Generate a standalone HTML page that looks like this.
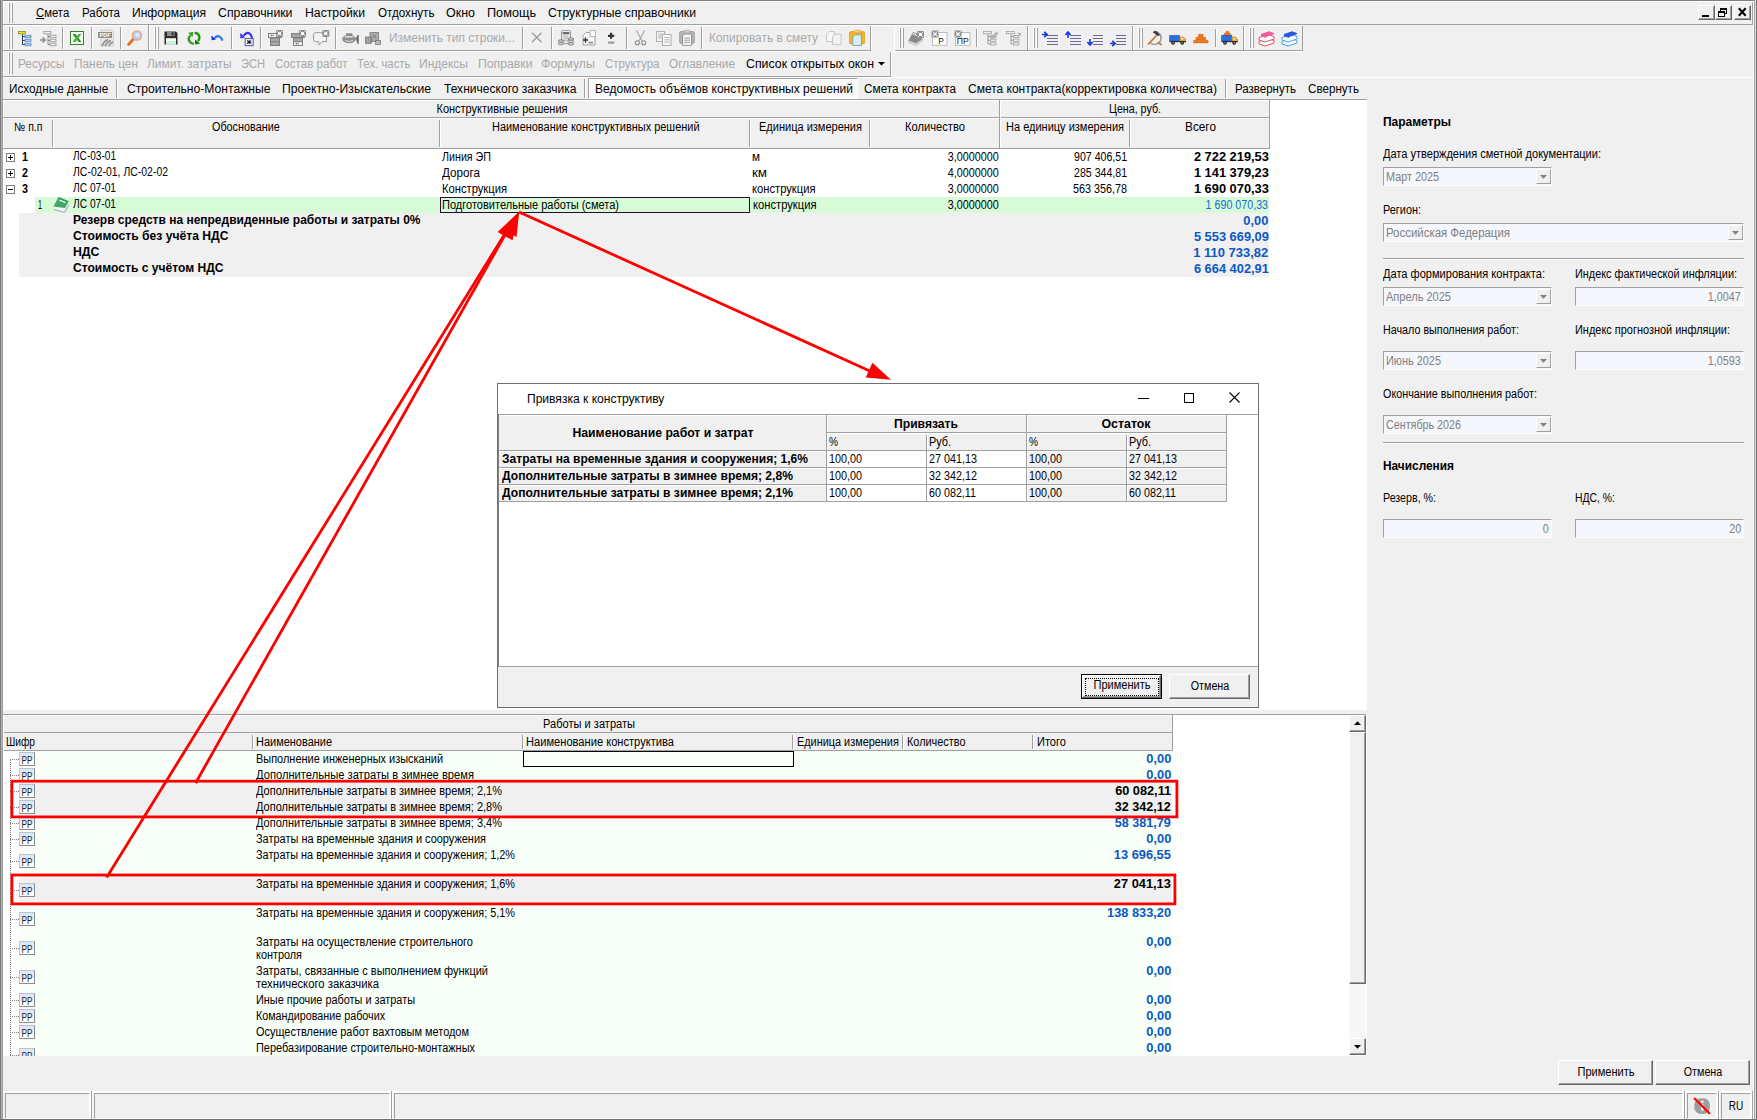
<!DOCTYPE html><html lang="ru"><head><meta charset="utf-8"><title>Смета</title><style>
html,body{margin:0;padding:0;}
body{width:1757px;height:1120px;overflow:hidden;background:#f0f0f0;position:relative;font-family:"Liberation Sans",sans-serif;}
div{position:absolute;box-sizing:border-box;}
svg{position:absolute;overflow:visible;}
.t{position:absolute;white-space:nowrap;display:inline-block;}
</style></head><body>
<div style="left:0px;top:0px;width:1757px;height:1px;background:#808080;"></div>
<div style="left:0px;top:1px;width:1757px;height:1px;background:#fff;"></div>
<div style="left:0px;top:0px;width:1px;height:1120px;background:#7c7c7c;"></div>
<div style="left:1px;top:0px;width:1px;height:1120px;background:#b0b0b0;"></div>
<div style="left:2px;top:0px;width:1px;height:1120px;background:#a0a0a0;"></div>
<div style="left:3px;top:1px;width:1px;height:76px;background:#fff;"></div>
<div style="left:1756px;top:0px;width:1px;height:1120px;background:#707070;"></div>
<div style="left:1755px;top:0px;width:1px;height:1120px;background:#e0e0e0;"></div>
<div style="left:1754px;top:0px;width:1px;height:1120px;background:#a0a0a0;"></div>
<div style="left:1753px;top:1px;width:1px;height:1120px;background:#fff;"></div>
<div style="left:0px;top:1119px;width:1757px;height:1px;background:#707070;"></div>
<div style="left:8px;top:3px;width:1px;height:20px;background:#fff;"></div>
<div style="left:9px;top:3px;width:1px;height:20px;background:#a0a0a0;"></div>
<div style="left:11px;top:3px;width:1px;height:20px;background:#fff;"></div>
<div style="left:12px;top:3px;width:1px;height:20px;background:#a0a0a0;"></div>
<div style="left:3px;top:24px;width:1750px;height:1px;background:#a0a0a0;"></div>
<div style="left:3px;top:25px;width:1300px;height:1px;background:#fff;"></div>
<div style="left:1752px;top:2px;width:1px;height:23px;background:#a0a0a0;"></div>
<span class="t" id="t0" style="top:5.2px;font-size:12.5px;line-height:16.5px;color:#000;left:36.3px;transform-origin:0 50%;transform:scaleX(0.9046);">Смета</span>
<span class="t" id="t1" style="top:5.2px;font-size:12.5px;line-height:16.5px;color:#000;left:82px;transform-origin:0 50%;transform:scaleX(0.9212);">Работа</span>
<span class="t" id="t2" style="top:5.2px;font-size:12.5px;line-height:16.5px;color:#000;left:132px;transform-origin:0 50%;transform:scaleX(0.9667);">Информация</span>
<span class="t" id="t3" style="top:5.2px;font-size:12.5px;line-height:16.5px;color:#000;left:218px;transform-origin:0 50%;transform:scaleX(0.9837);">Справочники</span>
<span class="t" id="t4" style="top:5.2px;font-size:12.5px;line-height:16.5px;color:#000;left:305px;transform-origin:0 50%;transform:scaleX(0.9788);">Настройки</span>
<span class="t" id="t5" style="top:5.2px;font-size:12.5px;line-height:16.5px;color:#000;left:377.5px;transform-origin:0 50%;transform:scaleX(0.9296);">Отдохнуть</span>
<span class="t" id="t6" style="top:5.2px;font-size:12.5px;line-height:16.5px;color:#000;left:446px;transform-origin:0 50%;transform:scaleX(0.9984);">Окно</span>
<span class="t" id="t7" style="top:5.2px;font-size:12.5px;line-height:16.5px;color:#000;left:487px;transform-origin:0 50%;transform:scaleX(1.0149);">Помощь</span>
<span class="t" id="t8" style="top:5.2px;font-size:12.5px;line-height:16.5px;color:#000;left:548px;transform-origin:0 50%;transform:scaleX(0.9761);">Структурные справочники</span>
<div style="left:36px;top:18px;width:8px;height:1px;background:#000;"></div>
<div style="left:1698px;top:5px;width:17px;height:15px;background:#f0f0f0;border:1px solid;border-color:#fff #696969 #696969 #fff;box-shadow:inset -1px -1px 0 #a0a0a0;"></div>
<div style="left:1715px;top:5px;width:17px;height:15px;background:#f0f0f0;border:1px solid;border-color:#fff #696969 #696969 #fff;box-shadow:inset -1px -1px 0 #a0a0a0;"></div>
<div style="left:1734px;top:5px;width:17px;height:15px;background:#f0f0f0;border:1px solid;border-color:#fff #696969 #696969 #fff;box-shadow:inset -1px -1px 0 #a0a0a0;"></div>
<div style="left:1702px;top:15px;width:7px;height:2px;background:#000;"></div>
<div style="left:1720px;top:8px;width:7px;height:6px;border:1px solid #000;border-top-width:2px;"></div>
<div style="left:1718px;top:11px;width:7px;height:6px;background:#f0f0f0;border:1px solid #000;border-top-width:2px;"></div>
<svg style="left:1738px;top:8px" width="9" height="8"><path d="M0.8 0.3 L7.7 7.7 M7.7 0.3 L0.8 7.7" stroke="#000" stroke-width="2" fill="none"/></svg>
<div style="left:3px;top:50px;width:1300px;height:1px;background:#a0a0a0;"></div>
<div style="left:3px;top:51px;width:1300px;height:1px;background:#fff;"></div>
<div style="left:8px;top:27px;width:1px;height:22px;background:#fff;"></div>
<div style="left:9px;top:27px;width:1px;height:22px;background:#a0a0a0;"></div>
<div style="left:11px;top:27px;width:1px;height:22px;background:#fff;"></div>
<div style="left:12px;top:27px;width:1px;height:22px;background:#a0a0a0;"></div>
<div style="left:148px;top:25px;width:1px;height:25px;background:#a0a0a0;"></div>
<div style="left:149px;top:25px;width:1px;height:25px;background:#fff;"></div>
<div style="left:154px;top:27px;width:1px;height:22px;background:#fff;"></div>
<div style="left:155px;top:27px;width:1px;height:22px;background:#a0a0a0;"></div>
<div style="left:157px;top:27px;width:1px;height:22px;background:#fff;"></div>
<div style="left:158px;top:27px;width:1px;height:22px;background:#a0a0a0;"></div>
<div style="left:870px;top:26px;width:1px;height:24px;background:#a0a0a0;"></div>
<div style="left:871px;top:26px;width:1px;height:25px;background:#fff;"></div>
<div style="left:872px;top:26px;width:22px;height:26px;background:#f0f0f0;"></div>
<div style="left:894px;top:26px;width:1px;height:25px;background:#fff;"></div>
<div style="left:1027px;top:26px;width:1px;height:24px;background:#a0a0a0;"></div>
<div style="left:1028px;top:26px;width:1px;height:24px;background:#fff;"></div>
<div style="left:1132px;top:26px;width:1px;height:24px;background:#a0a0a0;"></div>
<div style="left:1133px;top:26px;width:1px;height:24px;background:#fff;"></div>
<div style="left:1243px;top:26px;width:1px;height:24px;background:#a0a0a0;"></div>
<div style="left:1244px;top:26px;width:1px;height:24px;background:#fff;"></div>
<div style="left:1302px;top:26px;width:1px;height:25px;background:#a0a0a0;"></div>
<div style="left:899px;top:28px;width:1px;height:20px;background:#fff;"></div>
<div style="left:900px;top:28px;width:1px;height:20px;background:#a0a0a0;"></div>
<div style="left:902px;top:28px;width:1px;height:20px;background:#fff;"></div>
<div style="left:903px;top:28px;width:1px;height:20px;background:#a0a0a0;"></div>
<div style="left:1033px;top:28px;width:1px;height:20px;background:#fff;"></div>
<div style="left:1034px;top:28px;width:1px;height:20px;background:#a0a0a0;"></div>
<div style="left:1036px;top:28px;width:1px;height:20px;background:#fff;"></div>
<div style="left:1037px;top:28px;width:1px;height:20px;background:#a0a0a0;"></div>
<div style="left:1138px;top:28px;width:1px;height:20px;background:#fff;"></div>
<div style="left:1139px;top:28px;width:1px;height:20px;background:#a0a0a0;"></div>
<div style="left:1141px;top:28px;width:1px;height:20px;background:#fff;"></div>
<div style="left:1142px;top:28px;width:1px;height:20px;background:#a0a0a0;"></div>
<div style="left:1249px;top:28px;width:1px;height:20px;background:#fff;"></div>
<div style="left:1250px;top:28px;width:1px;height:20px;background:#a0a0a0;"></div>
<div style="left:1252px;top:28px;width:1px;height:20px;background:#fff;"></div>
<div style="left:1253px;top:28px;width:1px;height:20px;background:#a0a0a0;"></div>
<div style="left:1303px;top:26px;width:450px;height:26px;background:#f0f0f0;"></div>
<div style="left:62px;top:27px;width:1px;height:22px;background:#a0a0a0;"></div>
<div style="left:63px;top:27px;width:1px;height:22px;background:#fff;"></div>
<div style="left:91px;top:27px;width:1px;height:22px;background:#a0a0a0;"></div>
<div style="left:92px;top:27px;width:1px;height:22px;background:#fff;"></div>
<div style="left:120px;top:27px;width:1px;height:22px;background:#a0a0a0;"></div>
<div style="left:121px;top:27px;width:1px;height:22px;background:#fff;"></div>
<div style="left:231px;top:27px;width:1px;height:22px;background:#a0a0a0;"></div>
<div style="left:232px;top:27px;width:1px;height:22px;background:#fff;"></div>
<div style="left:260px;top:27px;width:1px;height:22px;background:#a0a0a0;"></div>
<div style="left:261px;top:27px;width:1px;height:22px;background:#fff;"></div>
<div style="left:335px;top:27px;width:1px;height:22px;background:#a0a0a0;"></div>
<div style="left:336px;top:27px;width:1px;height:22px;background:#fff;"></div>
<div style="left:522px;top:27px;width:1px;height:22px;background:#a0a0a0;"></div>
<div style="left:523px;top:27px;width:1px;height:22px;background:#fff;"></div>
<div style="left:551px;top:27px;width:1px;height:22px;background:#a0a0a0;"></div>
<div style="left:552px;top:27px;width:1px;height:22px;background:#fff;"></div>
<div style="left:626px;top:27px;width:1px;height:22px;background:#a0a0a0;"></div>
<div style="left:627px;top:27px;width:1px;height:22px;background:#fff;"></div>
<div style="left:701px;top:27px;width:1px;height:22px;background:#a0a0a0;"></div>
<div style="left:702px;top:27px;width:1px;height:22px;background:#fff;"></div>
<div style="left:976px;top:29px;width:1px;height:18px;background:#a0a0a0;"></div>
<div style="left:977px;top:29px;width:1px;height:18px;background:#fff;"></div>
<div style="left:1215px;top:29px;width:1px;height:18px;background:#a0a0a0;"></div>
<div style="left:1216px;top:29px;width:1px;height:18px;background:#fff;"></div>
<span class="t" id="t9" style="top:30.2px;font-size:12.5px;line-height:16.5px;color:#a9a9a9;left:389px;transform-origin:0 50%;transform:scaleX(0.9577);">Изменить тип строки...</span>
<span class="t" id="t10" style="top:30.2px;font-size:12.5px;line-height:16.5px;color:#a9a9a9;left:709px;transform-origin:0 50%;transform:scaleX(0.9529);">Копировать в смету</span>
<div style="left:3px;top:76px;width:888px;height:1px;background:#a0a0a0;"></div>
<div style="left:3px;top:77px;width:1750px;height:1px;background:#fff;"></div>
<div style="left:8px;top:53px;width:1px;height:21px;background:#fff;"></div>
<div style="left:9px;top:53px;width:1px;height:21px;background:#a0a0a0;"></div>
<div style="left:11px;top:53px;width:1px;height:21px;background:#fff;"></div>
<div style="left:12px;top:53px;width:1px;height:21px;background:#a0a0a0;"></div>
<div style="left:890px;top:52px;width:1px;height:25px;background:#a0a0a0;"></div>
<div style="left:891px;top:52px;width:1px;height:25px;background:#fff;"></div>
<span class="t" id="t11" style="top:56.2px;font-size:12.5px;line-height:16.5px;color:#a9a9a9;left:18px;transform-origin:0 50%;transform:scaleX(0.9433);">Ресурсы</span>
<span class="t" id="t12" style="top:56.2px;font-size:12.5px;line-height:16.5px;color:#a9a9a9;left:74px;transform-origin:0 50%;transform:scaleX(0.9477);">Панель цен</span>
<span class="t" id="t13" style="top:56.2px;font-size:12.5px;line-height:16.5px;color:#a9a9a9;left:147px;transform-origin:0 50%;transform:scaleX(0.9545);">Лимит. затраты</span>
<span class="t" id="t14" style="top:56.2px;font-size:12.5px;line-height:16.5px;color:#a9a9a9;left:241px;transform-origin:0 50%;transform:scaleX(0.8873);">ЭСН</span>
<span class="t" id="t15" style="top:56.2px;font-size:12.5px;line-height:16.5px;color:#a9a9a9;left:274.5px;transform-origin:0 50%;transform:scaleX(0.9252);">Состав работ</span>
<span class="t" id="t16" style="top:56.2px;font-size:12.5px;line-height:16.5px;color:#a9a9a9;left:356.5px;transform-origin:0 50%;transform:scaleX(0.9104);">Тех. часть</span>
<span class="t" id="t17" style="top:56.2px;font-size:12.5px;line-height:16.5px;color:#a9a9a9;left:419px;transform-origin:0 50%;transform:scaleX(0.9611);">Индексы</span>
<span class="t" id="t18" style="top:56.2px;font-size:12.5px;line-height:16.5px;color:#a9a9a9;left:477.5px;transform-origin:0 50%;transform:scaleX(0.9784);">Поправки</span>
<span class="t" id="t19" style="top:56.2px;font-size:12.5px;line-height:16.5px;color:#a9a9a9;left:541px;transform-origin:0 50%;transform:scaleX(0.9925);">Формулы</span>
<span class="t" id="t20" style="top:56.2px;font-size:12.5px;line-height:16.5px;color:#a9a9a9;left:604.5px;transform-origin:0 50%;transform:scaleX(0.9189);">Структура</span>
<span class="t" id="t21" style="top:56.2px;font-size:12.5px;line-height:16.5px;color:#a9a9a9;left:669px;transform-origin:0 50%;transform:scaleX(0.9469);">Оглавление</span>
<span class="t" id="t22" style="top:56.2px;font-size:12.5px;line-height:16.5px;color:#000;left:746px;transform-origin:0 50%;transform:scaleX(0.9868);">Список открытых окон</span>
<svg style="left:878px;top:62px" width="7" height="4"><path d="M0 0H7L3.5 3.5Z" fill="#000"/></svg>
<div style="left:3px;top:99px;width:1364px;height:1px;background:#a0a0a0;"></div>
<div style="left:588px;top:78px;width:270px;height:21px;background:#f9f9f9;border:1px solid;border-color:#a0a0a0 #fff #fff #a0a0a0;"></div>
<span class="t" id="t23" style="top:81.2px;font-size:12.5px;line-height:16.5px;color:#000;left:8.7px;transform-origin:0 50%;transform:scaleX(0.9401);">Исходные данные</span>
<span class="t" id="t24" style="top:81.2px;font-size:12.5px;line-height:16.5px;color:#000;left:126.5px;transform-origin:0 50%;transform:scaleX(0.9713);">Строительно-Монтажные</span>
<span class="t" id="t25" style="top:81.2px;font-size:12.5px;line-height:16.5px;color:#000;left:282px;transform-origin:0 50%;transform:scaleX(0.9729);">Проектно-Изыскательские</span>
<span class="t" id="t26" style="top:81.2px;font-size:12.5px;line-height:16.5px;color:#000;left:443.5px;transform-origin:0 50%;transform:scaleX(0.9637);">Технического заказчика</span>
<span class="t" id="t27" style="top:81.2px;font-size:12.5px;line-height:16.5px;color:#000;left:595px;transform-origin:0 50%;transform:scaleX(0.9637);">Ведомость объёмов конструктивных решений</span>
<span class="t" id="t28" style="top:81.2px;font-size:12.5px;line-height:16.5px;color:#000;left:864px;transform-origin:0 50%;transform:scaleX(0.9445);">Смета контракта</span>
<span class="t" id="t29" style="top:81.2px;font-size:12.5px;line-height:16.5px;color:#000;left:968px;transform-origin:0 50%;transform:scaleX(0.9590);">Смета контракта(корректировка количества)</span>
<span class="t" id="t30" style="top:81.2px;font-size:12.5px;line-height:16.5px;color:#000;left:1235px;transform-origin:0 50%;transform:scaleX(0.9205);">Развернуть</span>
<span class="t" id="t31" style="top:81.2px;font-size:12.5px;line-height:16.5px;color:#000;left:1308px;transform-origin:0 50%;transform:scaleX(0.9302);">Свернуть</span>
<div style="left:116px;top:79px;width:1px;height:19px;background:#a0a0a0;"></div>
<div style="left:117px;top:79px;width:1px;height:19px;background:#fff;"></div>
<div style="left:584px;top:79px;width:1px;height:19px;background:#a0a0a0;"></div>
<div style="left:585px;top:79px;width:1px;height:19px;background:#fff;"></div>
<div style="left:1225px;top:79px;width:1px;height:19px;background:#a0a0a0;"></div>
<div style="left:1226px;top:79px;width:1px;height:19px;background:#fff;"></div>
<div style="left:3px;top:100px;width:1364px;height:610px;background:#fff;"></div>
<div style="left:3px;top:100px;width:1267px;height:49px;background:#f0f0f0;"></div>
<div style="left:3px;top:100px;width:1266px;height:1px;background:#fff;"></div>
<div style="left:3px;top:118px;width:1266px;height:1px;background:#fff;"></div>
<div style="left:3px;top:100px;width:1px;height:48px;background:#fff;"></div>
<div style="left:3px;top:117px;width:1267px;height:1px;background:#a0a0a0;"></div>
<div style="left:3px;top:148px;width:1267px;height:1px;background:#a0a0a0;"></div>
<div style="left:1269px;top:100px;width:1px;height:49px;background:#a0a0a0;"></div>
<div style="left:999px;top:100px;width:1px;height:48px;background:#a0a0a0;"></div>
<div style="left:52px;top:120px;width:1px;height:27px;background:#a0a0a0;"></div>
<div style="left:53px;top:120px;width:1px;height:27px;background:#fff;"></div>
<div style="left:439px;top:120px;width:1px;height:27px;background:#a0a0a0;"></div>
<div style="left:440px;top:120px;width:1px;height:27px;background:#fff;"></div>
<div style="left:749px;top:120px;width:1px;height:27px;background:#a0a0a0;"></div>
<div style="left:750px;top:120px;width:1px;height:27px;background:#fff;"></div>
<div style="left:869px;top:120px;width:1px;height:27px;background:#a0a0a0;"></div>
<div style="left:870px;top:120px;width:1px;height:27px;background:#fff;"></div>
<div style="left:1129px;top:120px;width:1px;height:27px;background:#a0a0a0;"></div>
<div style="left:1130px;top:120px;width:1px;height:27px;background:#fff;"></div>
<div style="left:1000px;top:100px;width:1px;height:48px;background:#fff;"></div>
<span class="t" id="t32" style="top:100.5px;font-size:12px;line-height:16px;color:#000;left:501.5px;transform-origin:0 50%;transform:scaleX(0.9159) translateX(-50%);">Конструктивные решения</span>
<span class="t" id="t33" style="top:100.5px;font-size:12px;line-height:16px;color:#000;left:1135px;transform-origin:0 50%;transform:scaleX(0.8903) translateX(-50%);">Цена, руб.</span>
<span class="t" id="t34" style="top:118.6px;font-size:12px;line-height:16px;color:#000;left:13.6px;transform-origin:0 50%;transform:scaleX(0.8726);">№ п.п</span>
<span class="t" id="t35" style="top:118.6px;font-size:12px;line-height:16px;color:#000;left:212.3px;transform-origin:0 50%;transform:scaleX(0.9014);">Обоснование</span>
<span class="t" id="t36" style="top:118.6px;font-size:12px;line-height:16px;color:#000;left:491.5px;transform-origin:0 50%;transform:scaleX(0.9122);">Наименование конструктивных решений</span>
<span class="t" id="t37" style="top:118.6px;font-size:12px;line-height:16px;color:#000;left:759px;transform-origin:0 50%;transform:scaleX(0.9177);">Единица измерения</span>
<span class="t" id="t38" style="top:118.6px;font-size:12px;line-height:16px;color:#000;left:905px;transform-origin:0 50%;transform:scaleX(0.9309);">Количество</span>
<span class="t" id="t39" style="top:118.6px;font-size:12px;line-height:16px;color:#000;left:1006px;transform-origin:0 50%;transform:scaleX(0.9173);">На единицу измерения</span>
<span class="t" id="t40" style="top:118.6px;font-size:12px;line-height:16px;color:#000;left:1185px;transform-origin:0 50%;transform:scaleX(0.9851);">Всего</span>
<div style="left:35px;top:197px;width:1234px;height:16px;background:#d7fad7;"></div>
<div style="left:19px;top:213px;width:1250px;height:64px;background:#f0f0f0;"></div>
<div style="left:6px;top:153px;width:9px;height:9px;background:#fff;border:1px solid #808080;"></div>
<div style="left:8px;top:157px;width:5px;height:1px;background:#000;"></div>
<div style="left:10px;top:155px;width:1px;height:5px;background:#000;"></div>
<div style="left:6px;top:169px;width:9px;height:9px;background:#fff;border:1px solid #808080;"></div>
<div style="left:8px;top:173px;width:5px;height:1px;background:#000;"></div>
<div style="left:10px;top:171px;width:1px;height:5px;background:#000;"></div>
<div style="left:6px;top:185px;width:9px;height:9px;background:#fff;border:1px solid #808080;"></div>
<div style="left:8px;top:189px;width:5px;height:1px;background:#000;"></div>
<span class="t" id="t41" style="top:148.0px;font-size:13px;line-height:17px;color:#000;font-weight:bold;left:22px;transform-origin:0 50%;transform:scaleX(0.8294);">1</span>
<span class="t" id="t42" style="top:147.5px;font-size:12px;line-height:16px;color:#000;left:72.5px;transform-origin:0 50%;transform:scaleX(0.8393);">ЛС-03-01</span>
<span class="t" id="t43" style="top:148.5px;font-size:12px;line-height:16px;color:#000;left:442px;transform-origin:0 50%;transform:scaleX(0.8909);">Линия ЭП</span>
<span class="t" id="t44" style="top:148.5px;font-size:12px;line-height:16px;color:#000;left:752px;transform-origin:0 50%;transform:scaleX(0.9697);">м</span>
<span class="t" id="t45" style="top:148.5px;font-size:12px;line-height:16px;color:#000;right:758.5px;transform-origin:100% 50%;transform:scaleX(0.8989);">3,0000000</span>
<span class="t" id="t46" style="top:148.5px;font-size:12px;line-height:16px;color:#000;right:629.5px;transform-origin:100% 50%;transform:scaleX(0.8824);">907 406,51</span>
<span class="t" id="t47" style="top:148.0px;font-size:13px;line-height:17px;color:#000;font-weight:bold;right:488.5px;transform-origin:100% 50%;transform:scaleX(0.9881);">2 722 219,53</span>
<span class="t" id="t48" style="top:164.0px;font-size:13px;line-height:17px;color:#000;font-weight:bold;left:22px;transform-origin:0 50%;transform:scaleX(0.8294);">2</span>
<span class="t" id="t49" style="top:163.5px;font-size:12px;line-height:16px;color:#000;left:72.5px;transform-origin:0 50%;transform:scaleX(0.8706);">ЛС-02-01, ЛС-02-02</span>
<span class="t" id="t50" style="top:164.5px;font-size:12px;line-height:16px;color:#000;left:442px;transform-origin:0 50%;transform:scaleX(0.9724);">Дорога</span>
<span class="t" id="t51" style="top:164.5px;font-size:12px;line-height:16px;color:#000;left:752px;transform-origin:0 50%;transform:scaleX(1.1111);">км</span>
<span class="t" id="t52" style="top:164.5px;font-size:12px;line-height:16px;color:#000;right:758.5px;transform-origin:100% 50%;transform:scaleX(0.8989);">4,0000000</span>
<span class="t" id="t53" style="top:164.5px;font-size:12px;line-height:16px;color:#000;right:629.5px;transform-origin:100% 50%;transform:scaleX(0.8824);">285 344,81</span>
<span class="t" id="t54" style="top:164.0px;font-size:13px;line-height:17px;color:#000;font-weight:bold;right:488.5px;transform-origin:100% 50%;transform:scaleX(0.9881);">1 141 379,23</span>
<span class="t" id="t55" style="top:180.0px;font-size:13px;line-height:17px;color:#000;font-weight:bold;left:22px;transform-origin:0 50%;transform:scaleX(0.8294);">3</span>
<span class="t" id="t56" style="top:179.5px;font-size:12px;line-height:16px;color:#000;left:72.5px;transform-origin:0 50%;transform:scaleX(0.8502);">ЛС 07-01</span>
<span class="t" id="t57" style="top:180.5px;font-size:12px;line-height:16px;color:#000;left:442px;transform-origin:0 50%;transform:scaleX(0.9332);">Конструкция</span>
<span class="t" id="t58" style="top:180.5px;font-size:12px;line-height:16px;color:#000;left:752px;transform-origin:0 50%;transform:scaleX(0.9332);">конструкция</span>
<span class="t" id="t59" style="top:180.5px;font-size:12px;line-height:16px;color:#000;right:758.5px;transform-origin:100% 50%;transform:scaleX(0.8989);">3,0000000</span>
<span class="t" id="t60" style="top:180.5px;font-size:12px;line-height:16px;color:#000;right:629.5px;transform-origin:100% 50%;transform:scaleX(0.8991);">563 356,78</span>
<span class="t" id="t61" style="top:180.0px;font-size:13px;line-height:17px;color:#000;font-weight:bold;right:488.5px;transform-origin:100% 50%;transform:scaleX(0.9881);">1 690 070,33</span>
<span class="t" id="t62" style="top:196.5px;font-size:12px;line-height:16px;color:#000;left:37.5px;transform-origin:0 50%;transform:scaleX(0.5981);">1</span>
<span class="t" id="t63" style="top:195.5px;font-size:12px;line-height:16px;color:#000;left:72.5px;transform-origin:0 50%;transform:scaleX(0.8502);">ЛС 07-01</span>
<div style="left:440px;top:197px;width:310px;height:16px;background:#d7fad7;border:1px solid #2a0a3a;"></div>
<span class="t" id="t64" style="top:196.5px;font-size:12px;line-height:16px;color:#000;left:442px;transform-origin:0 50%;transform:scaleX(0.9196);">Подготовительные работы (смета)</span>
<span class="t" id="t65" style="top:196.5px;font-size:12px;line-height:16px;color:#000;left:752.5px;transform-origin:0 50%;transform:scaleX(0.9332);">конструкция</span>
<span class="t" id="t66" style="top:196.5px;font-size:12px;line-height:16px;color:#000;right:758.5px;transform-origin:100% 50%;transform:scaleX(0.8989);">3,0000000</span>
<span class="t" id="t67" style="top:196.5px;font-size:12px;line-height:16px;color:#0f6fd6;right:488.5px;transform-origin:100% 50%;transform:scaleX(0.8919);">1 690 070,33</span>
<span class="t" id="t68" style="top:211.5px;font-size:12px;line-height:16px;color:#000;font-weight:bold;left:72.5px;transform-origin:0 50%;transform:scaleX(0.9987);">Резерв средств на непредвиденные работы и затраты 0%</span>
<span class="t" id="t69" style="top:212.0px;font-size:13px;line-height:17px;color:#0c58c4;font-weight:bold;right:488.5px;transform-origin:100% 50%;transform:scaleX(0.9877);">0,00</span>
<span class="t" id="t70" style="top:227.5px;font-size:12px;line-height:16px;color:#000;font-weight:bold;left:72.5px;transform-origin:0 50%;transform:scaleX(1.0116);">Стоимость без учёта НДС</span>
<span class="t" id="t71" style="top:228.0px;font-size:13px;line-height:17px;color:#0c58c4;font-weight:bold;right:488.5px;transform-origin:100% 50%;transform:scaleX(0.9881);">5 553 669,09</span>
<span class="t" id="t72" style="top:243.5px;font-size:12px;line-height:16px;color:#000;font-weight:bold;left:72.5px;transform-origin:0 50%;transform:scaleX(1.0235);">НДС</span>
<span class="t" id="t73" style="top:244.0px;font-size:13px;line-height:17px;color:#0c58c4;font-weight:bold;right:488.5px;transform-origin:100% 50%;transform:scaleX(0.9973);">1 110 733,82</span>
<span class="t" id="t74" style="top:259.5px;font-size:12px;line-height:16px;color:#000;font-weight:bold;left:72.5px;transform-origin:0 50%;transform:scaleX(1.0063);">Стоимость с учётом НДС</span>
<span class="t" id="t75" style="top:260.0px;font-size:13px;line-height:17px;color:#0c58c4;font-weight:bold;right:488.5px;transform-origin:100% 50%;transform:scaleX(0.9881);">6 664 402,91</span>
<svg style="left:53px;top:197px" width="16" height="16" viewBox="0 0 16 16">
<path d="M0.4 9.5 L12 11 L11.5 15.4 L0.8 12.4 Z" fill="#f2f4f5"/>
<path d="M12 11 L15.6 4.4 L15.6 8.2 L11.5 15.4 Z" fill="#e4e7ec"/>
<path d="M0.8 12.4 L11.5 15.4 L15.6 8.2" stroke="#a8b2c6" stroke-width="1.1" fill="none"/>
<path d="M5.5 0.3 L15.6 4.4 L12 11 L0.4 9.5 Z" fill="#43a766"/>
<path d="M5.5 0.5 L15.4 4.5" stroke="#2f8c56" stroke-width="0.9" fill="none"/>
<path d="M6.4 3.2 L12.4 5.6" stroke="#e8f6ec" stroke-width="1.3"/></svg>
<div style="left:3px;top:710px;width:1364px;height:5px;background:#f0f0f0;"></div>
<div style="left:3px;top:714px;width:1363px;height:1px;background:#a0a0a0;"></div>
<div style="left:3px;top:715px;width:1364px;height:341px;background:#fff;"></div>
<div style="left:4px;top:716px;width:1168px;height:34px;background:#f0f0f0;"></div>
<div style="left:4px;top:732px;width:1169px;height:1px;background:#a0a0a0;"></div>
<div style="left:4px;top:750px;width:1169px;height:1px;background:#a0a0a0;"></div>
<div style="left:1172px;top:715px;width:1px;height:36px;background:#a0a0a0;"></div>
<div style="left:252px;top:735px;width:1px;height:14px;background:#a0a0a0;"></div>
<div style="left:253px;top:735px;width:1px;height:14px;background:#fff;"></div>
<div style="left:522px;top:735px;width:1px;height:14px;background:#a0a0a0;"></div>
<div style="left:523px;top:735px;width:1px;height:14px;background:#fff;"></div>
<div style="left:792px;top:735px;width:1px;height:14px;background:#a0a0a0;"></div>
<div style="left:793px;top:735px;width:1px;height:14px;background:#fff;"></div>
<div style="left:902px;top:735px;width:1px;height:14px;background:#a0a0a0;"></div>
<div style="left:903px;top:735px;width:1px;height:14px;background:#fff;"></div>
<div style="left:1032px;top:735px;width:1px;height:14px;background:#a0a0a0;"></div>
<div style="left:1033px;top:735px;width:1px;height:14px;background:#fff;"></div>
<span class="t" id="t76" style="top:715.6px;font-size:12px;line-height:16px;color:#000;left:588.5px;transform-origin:0 50%;transform:scaleX(0.9230) translateX(-50%);">Работы и затраты</span>
<span class="t" id="t77" style="top:733.6px;font-size:12px;line-height:16px;color:#000;left:6px;transform-origin:0 50%;transform:scaleX(0.8467);">Шифр</span>
<span class="t" id="t78" style="top:733.6px;font-size:12px;line-height:16px;color:#000;left:256px;transform-origin:0 50%;transform:scaleX(0.9136);">Наименование</span>
<span class="t" id="t79" style="top:733.6px;font-size:12px;line-height:16px;color:#000;left:526px;transform-origin:0 50%;transform:scaleX(0.9264);">Наименование конструктива</span>
<span class="t" id="t80" style="top:733.6px;font-size:12px;line-height:16px;color:#000;left:796.6px;transform-origin:0 50%;transform:scaleX(0.9070);">Единица измерения</span>
<span class="t" id="t81" style="top:733.6px;font-size:12px;line-height:16px;color:#000;left:906.5px;transform-origin:0 50%;transform:scaleX(0.9076);">Количество</span>
<span class="t" id="t82" style="top:733.6px;font-size:12px;line-height:16px;color:#000;left:1036.8px;transform-origin:0 50%;transform:scaleX(0.9188);">Итого</span>
<div style="left:19px;top:751px;width:1153px;height:305px;background:#f8fff8;"></div>
<div style="left:19px;top:783px;width:1153px;height:32px;background:#f0f0f0;"></div>
<div style="left:19px;top:876px;width:1153px;height:29px;background:#f0f0f0;"></div>
<div style="left:523px;top:751px;width:271px;height:16px;background:#fafffa;border:1px solid #000;"></div>
<div style="left:10px;top:759px;width:1px;height:296px;border-left:1px dotted #808080;"></div>
<div style="left:10px;top:759px;width:9px;height:1px;border-top:1px dotted #808080;"></div>
<div style="left:19px;top:752px;width:16px;height:14px;background:linear-gradient(#d6e6fb 0%,#e4effc 45%,#fff 75%);border:1px solid;border-color:#c4c4c4 #8a8a8a #8a8a8a #c4c4c4;"></div>
<span class="t" id="t83" style="top:752.8px;font-size:10.5px;line-height:14.5px;color:#222;left:27px;transform-origin:0 50%;transform:scaleX(0.7800) translateX(-50%);">РР</span>
<span class="t" id="t84" style="top:750.6px;font-size:12px;line-height:16px;color:#000;left:255.8px;transform-origin:0 50%;transform:scaleX(0.9130);">Выполнение инженерных изысканий</span>
<span class="t" id="t85" style="top:750.1px;font-size:13px;line-height:17px;color:#0c58c4;font-weight:bold;right:586px;transform-origin:100% 50%;transform:scaleX(0.9877);">0,00</span>
<div style="left:10px;top:775px;width:9px;height:1px;border-top:1px dotted #808080;"></div>
<div style="left:19px;top:768px;width:16px;height:14px;background:linear-gradient(#d6e6fb 0%,#e4effc 45%,#fff 75%);border:1px solid;border-color:#c4c4c4 #8a8a8a #8a8a8a #c4c4c4;"></div>
<span class="t" id="t86" style="top:768.8px;font-size:10.5px;line-height:14.5px;color:#222;left:27px;transform-origin:0 50%;transform:scaleX(0.7800) translateX(-50%);">РР</span>
<span class="t" id="t87" style="top:766.6px;font-size:12px;line-height:16px;color:#000;left:255.8px;transform-origin:0 50%;transform:scaleX(0.9308);">Дополнительные затраты в зимнее время</span>
<span class="t" id="t88" style="top:766.1px;font-size:13px;line-height:17px;color:#0c58c4;font-weight:bold;right:586px;transform-origin:100% 50%;transform:scaleX(0.9877);">0,00</span>
<div style="left:10px;top:791px;width:9px;height:1px;border-top:1px dotted #808080;"></div>
<div style="left:19px;top:784px;width:16px;height:14px;background:linear-gradient(#d6e6fb 0%,#e4effc 45%,#fff 75%);border:1px solid;border-color:#c4c4c4 #8a8a8a #8a8a8a #c4c4c4;"></div>
<span class="t" id="t89" style="top:784.8px;font-size:10.5px;line-height:14.5px;color:#222;left:27px;transform-origin:0 50%;transform:scaleX(0.7800) translateX(-50%);">РР</span>
<span class="t" id="t90" style="top:782.6px;font-size:12px;line-height:16px;color:#000;left:255.8px;transform-origin:0 50%;transform:scaleX(0.9171);">Дополнительные затраты в зимнее время; 2,1%</span>
<span class="t" id="t91" style="top:782.1px;font-size:13px;line-height:17px;color:#000;font-weight:bold;right:586px;transform-origin:100% 50%;transform:scaleX(0.9803);">60 082,11</span>
<div style="left:10px;top:807px;width:9px;height:1px;border-top:1px dotted #808080;"></div>
<div style="left:19px;top:800px;width:16px;height:14px;background:linear-gradient(#d6e6fb 0%,#e4effc 45%,#fff 75%);border:1px solid;border-color:#c4c4c4 #8a8a8a #8a8a8a #c4c4c4;"></div>
<span class="t" id="t92" style="top:800.8px;font-size:10.5px;line-height:14.5px;color:#222;left:27px;transform-origin:0 50%;transform:scaleX(0.7800) translateX(-50%);">РР</span>
<span class="t" id="t93" style="top:798.6px;font-size:12px;line-height:16px;color:#000;left:255.8px;transform-origin:0 50%;transform:scaleX(0.9171);">Дополнительные затраты в зимнее время; 2,8%</span>
<span class="t" id="t94" style="top:798.1px;font-size:13px;line-height:17px;color:#000;font-weight:bold;right:586px;transform-origin:100% 50%;transform:scaleX(0.9681);">32 342,12</span>
<div style="left:10px;top:823px;width:9px;height:1px;border-top:1px dotted #808080;"></div>
<div style="left:19px;top:816px;width:16px;height:14px;background:linear-gradient(#d6e6fb 0%,#e4effc 45%,#fff 75%);border:1px solid;border-color:#c4c4c4 #8a8a8a #8a8a8a #c4c4c4;"></div>
<span class="t" id="t95" style="top:816.8px;font-size:10.5px;line-height:14.5px;color:#222;left:27px;transform-origin:0 50%;transform:scaleX(0.7800) translateX(-50%);">РР</span>
<span class="t" id="t96" style="top:814.6px;font-size:12px;line-height:16px;color:#000;left:255.8px;transform-origin:0 50%;transform:scaleX(0.9171);">Дополнительные затраты в зимнее время; 3,4%</span>
<span class="t" id="t97" style="top:814.1px;font-size:13px;line-height:17px;color:#0c58c4;font-weight:bold;right:586px;transform-origin:100% 50%;transform:scaleX(0.9681);">58 381,79</span>
<div style="left:10px;top:839px;width:9px;height:1px;border-top:1px dotted #808080;"></div>
<div style="left:19px;top:832px;width:16px;height:14px;background:linear-gradient(#d6e6fb 0%,#e4effc 45%,#fff 75%);border:1px solid;border-color:#c4c4c4 #8a8a8a #8a8a8a #c4c4c4;"></div>
<span class="t" id="t98" style="top:832.8px;font-size:10.5px;line-height:14.5px;color:#222;left:27px;transform-origin:0 50%;transform:scaleX(0.7800) translateX(-50%);">РР</span>
<span class="t" id="t99" style="top:830.6px;font-size:12px;line-height:16px;color:#000;left:255.8px;transform-origin:0 50%;transform:scaleX(0.9139);">Затраты на временные здания и сооружения</span>
<span class="t" id="t100" style="top:830.1px;font-size:13px;line-height:17px;color:#0c58c4;font-weight:bold;right:586px;transform-origin:100% 50%;transform:scaleX(0.9877);">0,00</span>
<div style="left:10px;top:861px;width:9px;height:1px;border-top:1px dotted #808080;"></div>
<div style="left:19px;top:854px;width:16px;height:14px;background:linear-gradient(#d6e6fb 0%,#e4effc 45%,#fff 75%);border:1px solid;border-color:#c4c4c4 #8a8a8a #8a8a8a #c4c4c4;"></div>
<span class="t" id="t101" style="top:854.8px;font-size:10.5px;line-height:14.5px;color:#222;left:27px;transform-origin:0 50%;transform:scaleX(0.7800) translateX(-50%);">РР</span>
<span class="t" id="t102" style="top:846.6px;font-size:12px;line-height:16px;color:#000;left:255.8px;transform-origin:0 50%;transform:scaleX(0.9066);">Затраты на временные здания и сооружения; 1,2%</span>
<span class="t" id="t103" style="top:846.1px;font-size:13px;line-height:17px;color:#0c58c4;font-weight:bold;right:586px;transform-origin:100% 50%;transform:scaleX(0.9854);">13 696,55</span>
<div style="left:10px;top:890px;width:9px;height:1px;border-top:1px dotted #808080;"></div>
<div style="left:19px;top:883px;width:16px;height:14px;background:linear-gradient(#d6e6fb 0%,#e4effc 45%,#fff 75%);border:1px solid;border-color:#c4c4c4 #8a8a8a #8a8a8a #c4c4c4;"></div>
<span class="t" id="t104" style="top:883.8px;font-size:10.5px;line-height:14.5px;color:#222;left:27px;transform-origin:0 50%;transform:scaleX(0.7800) translateX(-50%);">РР</span>
<span class="t" id="t105" style="top:875.6px;font-size:12px;line-height:16px;color:#000;left:255.8px;transform-origin:0 50%;transform:scaleX(0.9066);">Затраты на временные здания и сооружения; 1,6%</span>
<span class="t" id="t106" style="top:875.1px;font-size:13px;line-height:17px;color:#000;font-weight:bold;right:586px;transform-origin:100% 50%;transform:scaleX(0.9854);">27 041,13</span>
<div style="left:10px;top:919px;width:9px;height:1px;border-top:1px dotted #808080;"></div>
<div style="left:19px;top:912px;width:16px;height:14px;background:linear-gradient(#d6e6fb 0%,#e4effc 45%,#fff 75%);border:1px solid;border-color:#c4c4c4 #8a8a8a #8a8a8a #c4c4c4;"></div>
<span class="t" id="t107" style="top:912.8px;font-size:10.5px;line-height:14.5px;color:#222;left:27px;transform-origin:0 50%;transform:scaleX(0.7800) translateX(-50%);">РР</span>
<span class="t" id="t108" style="top:904.6px;font-size:12px;line-height:16px;color:#000;left:255.8px;transform-origin:0 50%;transform:scaleX(0.9066);">Затраты на временные здания и сооружения; 5,1%</span>
<span class="t" id="t109" style="top:904.1px;font-size:13px;line-height:17px;color:#0c58c4;font-weight:bold;right:586px;transform-origin:100% 50%;transform:scaleX(0.9834);">138 833,20</span>
<div style="left:10px;top:948px;width:9px;height:1px;border-top:1px dotted #808080;"></div>
<div style="left:19px;top:941px;width:16px;height:14px;background:linear-gradient(#d6e6fb 0%,#e4effc 45%,#fff 75%);border:1px solid;border-color:#c4c4c4 #8a8a8a #8a8a8a #c4c4c4;"></div>
<span class="t" id="t110" style="top:941.8px;font-size:10.5px;line-height:14.5px;color:#222;left:27px;transform-origin:0 50%;transform:scaleX(0.7800) translateX(-50%);">РР</span>
<span class="t" id="t111" style="top:933.6px;font-size:12px;line-height:16px;color:#000;left:255.8px;transform-origin:0 50%;transform:scaleX(0.9173);">Затраты на осуществление строительного</span>
<span class="t" id="t112" style="top:946.6px;font-size:12px;line-height:16px;color:#000;left:255.8px;transform-origin:0 50%;transform:scaleX(0.9061);">контроля</span>
<span class="t" id="t113" style="top:933.1px;font-size:13px;line-height:17px;color:#0c58c4;font-weight:bold;right:586px;transform-origin:100% 50%;transform:scaleX(0.9877);">0,00</span>
<div style="left:10px;top:977px;width:9px;height:1px;border-top:1px dotted #808080;"></div>
<div style="left:19px;top:970px;width:16px;height:14px;background:linear-gradient(#d6e6fb 0%,#e4effc 45%,#fff 75%);border:1px solid;border-color:#c4c4c4 #8a8a8a #8a8a8a #c4c4c4;"></div>
<span class="t" id="t114" style="top:970.8px;font-size:10.5px;line-height:14.5px;color:#222;left:27px;transform-origin:0 50%;transform:scaleX(0.7800) translateX(-50%);">РР</span>
<span class="t" id="t115" style="top:962.6px;font-size:12px;line-height:16px;color:#000;left:255.8px;transform-origin:0 50%;transform:scaleX(0.9175);">Затраты, связанные с выполнением функций</span>
<span class="t" id="t116" style="top:975.6px;font-size:12px;line-height:16px;color:#000;left:255.8px;transform-origin:0 50%;transform:scaleX(0.9412);">технического заказчика</span>
<span class="t" id="t117" style="top:962.1px;font-size:13px;line-height:17px;color:#0c58c4;font-weight:bold;right:586px;transform-origin:100% 50%;transform:scaleX(0.9877);">0,00</span>
<div style="left:10px;top:1000px;width:9px;height:1px;border-top:1px dotted #808080;"></div>
<div style="left:19px;top:993px;width:16px;height:14px;background:linear-gradient(#d6e6fb 0%,#e4effc 45%,#fff 75%);border:1px solid;border-color:#c4c4c4 #8a8a8a #8a8a8a #c4c4c4;"></div>
<span class="t" id="t118" style="top:993.8px;font-size:10.5px;line-height:14.5px;color:#222;left:27px;transform-origin:0 50%;transform:scaleX(0.7800) translateX(-50%);">РР</span>
<span class="t" id="t119" style="top:991.6px;font-size:12px;line-height:16px;color:#000;left:255.8px;transform-origin:0 50%;transform:scaleX(0.9077);">Иные прочие работы и затраты</span>
<span class="t" id="t120" style="top:991.1px;font-size:13px;line-height:17px;color:#0c58c4;font-weight:bold;right:586px;transform-origin:100% 50%;transform:scaleX(0.9877);">0,00</span>
<div style="left:10px;top:1016px;width:9px;height:1px;border-top:1px dotted #808080;"></div>
<div style="left:19px;top:1009px;width:16px;height:14px;background:linear-gradient(#d6e6fb 0%,#e4effc 45%,#fff 75%);border:1px solid;border-color:#c4c4c4 #8a8a8a #8a8a8a #c4c4c4;"></div>
<span class="t" id="t121" style="top:1009.8px;font-size:10.5px;line-height:14.5px;color:#222;left:27px;transform-origin:0 50%;transform:scaleX(0.7800) translateX(-50%);">РР</span>
<span class="t" id="t122" style="top:1007.6px;font-size:12px;line-height:16px;color:#000;left:255.8px;transform-origin:0 50%;transform:scaleX(0.8952);">Командирование рабочих</span>
<span class="t" id="t123" style="top:1007.1px;font-size:13px;line-height:17px;color:#0c58c4;font-weight:bold;right:586px;transform-origin:100% 50%;transform:scaleX(0.9877);">0,00</span>
<div style="left:10px;top:1032px;width:9px;height:1px;border-top:1px dotted #808080;"></div>
<div style="left:19px;top:1025px;width:16px;height:14px;background:linear-gradient(#d6e6fb 0%,#e4effc 45%,#fff 75%);border:1px solid;border-color:#c4c4c4 #8a8a8a #8a8a8a #c4c4c4;"></div>
<span class="t" id="t124" style="top:1025.8px;font-size:10.5px;line-height:14.5px;color:#222;left:27px;transform-origin:0 50%;transform:scaleX(0.7800) translateX(-50%);">РР</span>
<span class="t" id="t125" style="top:1023.6px;font-size:12px;line-height:16px;color:#000;left:255.8px;transform-origin:0 50%;transform:scaleX(0.9124);">Осуществление работ вахтовым методом</span>
<span class="t" id="t126" style="top:1023.1px;font-size:13px;line-height:17px;color:#0c58c4;font-weight:bold;right:586px;transform-origin:100% 50%;transform:scaleX(0.9877);">0,00</span>
<div style="left:10px;top:1055px;width:9px;height:1px;border-top:1px dotted #808080;"></div>
<div style="left:19px;top:1048px;width:16px;height:14px;background:linear-gradient(#d6e6fb 0%,#e4effc 45%,#fff 75%);border:1px solid;border-color:#c4c4c4 #8a8a8a #8a8a8a #c4c4c4;"></div>
<span class="t" id="t127" style="top:1048.8px;font-size:10.5px;line-height:14.5px;color:#222;left:27px;transform-origin:0 50%;transform:scaleX(0.7800) translateX(-50%);">РР</span>
<span class="t" id="t128" style="top:1039.6px;font-size:12px;line-height:16px;color:#000;left:255.8px;transform-origin:0 50%;transform:scaleX(0.9123);">Перебазирование строительно-монтажных</span>
<span class="t" id="t129" style="top:1039.1px;font-size:13px;line-height:17px;color:#0c58c4;font-weight:bold;right:586px;transform-origin:100% 50%;transform:scaleX(0.9877);">0,00</span>
<div style="left:3px;top:1056px;width:1364px;height:35px;background:#f0f0f0;"></div>
<div style="left:1349px;top:715px;width:17px;height:340px;background:#f7f7f7;"></div>
<div style="left:1349px;top:715px;width:17px;height:17px;background:#f0f0f0;border:1px solid;border-color:#fff #696969 #696969 #fff;box-shadow:inset -1px -1px 0 #a0a0a0;"></div>
<div style="left:1349px;top:1038px;width:17px;height:17px;background:#f0f0f0;border:1px solid;border-color:#fff #696969 #696969 #fff;box-shadow:inset -1px -1px 0 #a0a0a0;"></div>
<svg style="left:1354px;top:721px" width="7" height="4"><path d="M0 4H7L3.5 0.2Z" fill="#000"/></svg>
<svg style="left:1354px;top:1045px" width="7" height="4"><path d="M0 0H7L3.5 3.7Z" fill="#000"/></svg>
<div style="left:1349px;top:732px;width:17px;height:252px;background:#f0f0f0;border:1px solid;border-color:#fff #696969 #696969 #fff;box-shadow:inset -1px -1px 0 #a0a0a0;"></div>
<div style="left:3px;top:1091px;width:1750px;height:2px;background:#fff;"></div>
<div style="left:5px;top:1093px;width:85px;height:26px;border:1px solid;border-color:#a0a0a0 #fff #fff #a0a0a0;"></div>
<div style="left:90px;top:1091px;width:1px;height:28px;background:#fff;"></div>
<div style="left:91px;top:1091px;width:1px;height:28px;background:#a0a0a0;"></div>
<div style="left:92px;top:1091px;width:1px;height:28px;background:#fff;"></div>
<div style="left:94px;top:1093px;width:296px;height:26px;border:1px solid;border-color:#a0a0a0 #fff #fff #a0a0a0;"></div>
<div style="left:390px;top:1091px;width:1px;height:28px;background:#fff;"></div>
<div style="left:391px;top:1091px;width:1px;height:28px;background:#a0a0a0;"></div>
<div style="left:392px;top:1091px;width:1px;height:28px;background:#fff;"></div>
<div style="left:394px;top:1093px;width:1289px;height:26px;border:1px solid;border-color:#a0a0a0 #fff #fff #a0a0a0;"></div>
<div style="left:1683px;top:1091px;width:1px;height:28px;background:#fff;"></div>
<div style="left:1684px;top:1091px;width:1px;height:28px;background:#a0a0a0;"></div>
<div style="left:1685px;top:1091px;width:1px;height:28px;background:#fff;"></div>
<div style="left:1687px;top:1093px;width:30px;height:26px;border:1px solid;border-color:#a0a0a0 #fff #fff #a0a0a0;"></div>
<div style="left:1717px;top:1091px;width:1px;height:28px;background:#fff;"></div>
<div style="left:1718px;top:1091px;width:1px;height:28px;background:#a0a0a0;"></div>
<div style="left:1719px;top:1091px;width:1px;height:28px;background:#fff;"></div>
<div style="left:1721px;top:1093px;width:30px;height:26px;border:1px solid;border-color:#a0a0a0 #fff #fff #a0a0a0;"></div>
<div style="left:1751px;top:1091px;width:1px;height:28px;background:#fff;"></div>
<div style="left:1752px;top:1091px;width:1px;height:28px;background:#a0a0a0;"></div>
<div style="left:1753px;top:1091px;width:1px;height:28px;background:#fff;"></div>
<span class="t" id="t130" style="top:1097.8px;font-size:12.5px;line-height:16.5px;color:#000;left:1735.6px;transform-origin:0 50%;transform:scaleX(0.8028) translateX(-50%);">RU</span>
<svg style="left:1692px;top:1096px" width="20" height="20" viewBox="0 0 20 20"><rect x="2.3" y="2.3" width="15.6" height="15.6" rx="6.5" fill="#9e9e9e"/><circle cx="10.3" cy="5.8" r="1.4" fill="#f0f0f0"/><rect x="9.1" y="8.2" width="2.4" height="6.6" fill="#f0f0f0"/><path d="M2.6 2.6 L17.4 17.2" stroke="#ff0000" stroke-width="2.1" stroke-linecap="round"/></svg>
<div style="left:1367px;top:100px;width:386px;height:991px;background:#f0f0f0;"></div>
<span class="t" id="t131" style="top:114.0px;font-size:12px;line-height:16px;color:#000;font-weight:bold;left:1383px;transform-origin:0 50%;transform:scaleX(0.9977);">Параметры</span>
<span class="t" id="t132" style="top:146.0px;font-size:12px;line-height:16px;color:#000;left:1383px;transform-origin:0 50%;transform:scaleX(0.9185);">Дата утверждения сметной документации:</span>
<div style="left:1383px;top:167px;width:169px;height:19px;background:#f5f7fc;border:1px solid;border-color:#a0a0a0 #fff #fff #a0a0a0;"></div>
<div style="left:1536px;top:169px;width:15px;height:15px;background:#f0f0f0;border:1px solid;border-color:#fff #a0a0a0 #a0a0a0 #fff;"></div>
<svg style="left:1540px;top:175px" width="7" height="4"><path d="M0 0H7L3.5 3.7Z" fill="#808080"/></svg>
<span class="t" id="t133" style="top:168.5px;font-size:12px;line-height:16px;color:#808080;left:1386px;transform-origin:0 50%;transform:scaleX(0.9021);">Март 2025</span>
<span class="t" id="t134" style="top:202.0px;font-size:12px;line-height:16px;color:#000;left:1383px;transform-origin:0 50%;transform:scaleX(0.9075);">Регион:</span>
<div style="left:1383px;top:223px;width:361px;height:19px;background:#f5f7fc;border:1px solid;border-color:#a0a0a0 #fff #fff #a0a0a0;"></div>
<div style="left:1728px;top:225px;width:15px;height:15px;background:#f0f0f0;border:1px solid;border-color:#fff #a0a0a0 #a0a0a0 #fff;"></div>
<svg style="left:1732px;top:231px" width="7" height="4"><path d="M0 0H7L3.5 3.7Z" fill="#808080"/></svg>
<span class="t" id="t135" style="top:224.5px;font-size:12px;line-height:16px;color:#808080;left:1386px;transform-origin:0 50%;transform:scaleX(0.9522);">Российская Федерация</span>
<div style="left:1383px;top:258px;width:361px;height:1px;background:#a0a0a0;"></div>
<div style="left:1383px;top:259px;width:361px;height:1px;background:#fff;"></div>
<span class="t" id="t136" style="top:266.0px;font-size:12px;line-height:16px;color:#000;left:1383px;transform-origin:0 50%;transform:scaleX(0.9215);">Дата формирования контракта:</span>
<span class="t" id="t137" style="top:266.0px;font-size:12px;line-height:16px;color:#000;left:1575px;transform-origin:0 50%;transform:scaleX(0.9057);">Индекс фактической инфляции:</span>
<div style="left:1383px;top:287px;width:169px;height:19px;background:#f5f7fc;border:1px solid;border-color:#a0a0a0 #fff #fff #a0a0a0;"></div>
<div style="left:1536px;top:289px;width:15px;height:15px;background:#f0f0f0;border:1px solid;border-color:#fff #a0a0a0 #a0a0a0 #fff;"></div>
<svg style="left:1540px;top:295px" width="7" height="4"><path d="M0 0H7L3.5 3.7Z" fill="#808080"/></svg>
<span class="t" id="t138" style="top:288.5px;font-size:12px;line-height:16px;color:#808080;left:1386px;transform-origin:0 50%;transform:scaleX(0.9189);">Апрель 2025</span>
<div style="left:1575px;top:287px;width:169px;height:19px;background:#f5f7fc;border:1px solid;border-color:#a0a0a0 #fff #fff #a0a0a0;"></div>
<span class="t" id="t139" style="top:288.5px;font-size:12px;line-height:16px;color:#808080;right:16px;transform-origin:100% 50%;transform:scaleX(0.8991);">1,0047</span>
<span class="t" id="t140" style="top:322.0px;font-size:12px;line-height:16px;color:#000;left:1383px;transform-origin:0 50%;transform:scaleX(0.8948);">Начало выполнения работ:</span>
<span class="t" id="t141" style="top:322.0px;font-size:12px;line-height:16px;color:#000;left:1575px;transform-origin:0 50%;transform:scaleX(0.9121);">Индекс прогнозной инфляции:</span>
<div style="left:1383px;top:351px;width:169px;height:19px;background:#f5f7fc;border:1px solid;border-color:#a0a0a0 #fff #fff #a0a0a0;"></div>
<div style="left:1536px;top:353px;width:15px;height:15px;background:#f0f0f0;border:1px solid;border-color:#fff #a0a0a0 #a0a0a0 #fff;"></div>
<svg style="left:1540px;top:359px" width="7" height="4"><path d="M0 0H7L3.5 3.7Z" fill="#808080"/></svg>
<span class="t" id="t142" style="top:352.5px;font-size:12px;line-height:16px;color:#808080;left:1386px;transform-origin:0 50%;transform:scaleX(0.9084);">Июнь 2025</span>
<div style="left:1575px;top:351px;width:169px;height:19px;background:#f5f7fc;border:1px solid;border-color:#a0a0a0 #fff #fff #a0a0a0;"></div>
<span class="t" id="t143" style="top:352.5px;font-size:12px;line-height:16px;color:#808080;right:16px;transform-origin:100% 50%;transform:scaleX(0.8991);">1,0593</span>
<span class="t" id="t144" style="top:386.0px;font-size:12px;line-height:16px;color:#000;left:1383px;transform-origin:0 50%;transform:scaleX(0.8999);">Окончание выполнения работ:</span>
<div style="left:1383px;top:415px;width:169px;height:19px;background:#f5f7fc;border:1px solid;border-color:#a0a0a0 #fff #fff #a0a0a0;"></div>
<div style="left:1536px;top:417px;width:15px;height:15px;background:#f0f0f0;border:1px solid;border-color:#fff #a0a0a0 #a0a0a0 #fff;"></div>
<svg style="left:1540px;top:423px" width="7" height="4"><path d="M0 0H7L3.5 3.7Z" fill="#808080"/></svg>
<span class="t" id="t145" style="top:416.5px;font-size:12px;line-height:16px;color:#808080;left:1386px;transform-origin:0 50%;transform:scaleX(0.8950);">Сентябрь 2026</span>
<div style="left:1383px;top:442px;width:361px;height:1px;background:#a0a0a0;"></div>
<div style="left:1383px;top:443px;width:361px;height:1px;background:#fff;"></div>
<span class="t" id="t146" style="top:458.0px;font-size:12px;line-height:16px;color:#000;font-weight:bold;left:1383px;transform-origin:0 50%;transform:scaleX(0.9885);">Начисления</span>
<span class="t" id="t147" style="top:490.0px;font-size:12px;line-height:16px;color:#000;left:1383px;transform-origin:0 50%;transform:scaleX(0.8884);">Резерв, %:</span>
<span class="t" id="t148" style="top:490.0px;font-size:12px;line-height:16px;color:#000;left:1575px;transform-origin:0 50%;transform:scaleX(0.8669);">НДС, %:</span>
<div style="left:1383px;top:519px;width:169px;height:19px;background:#f5f7fc;border:1px solid;border-color:#a0a0a0 #fff #fff #a0a0a0;"></div>
<span class="t" id="t149" style="top:520.5px;font-size:12px;line-height:16px;color:#808080;right:208px;transform-origin:100% 50%;transform:scaleX(0.8972);">0</span>
<div style="left:1575px;top:519px;width:169px;height:19px;background:#f5f7fc;border:1px solid;border-color:#a0a0a0 #fff #fff #a0a0a0;"></div>
<span class="t" id="t150" style="top:520.5px;font-size:12px;line-height:16px;color:#808080;right:16px;transform-origin:100% 50%;transform:scaleX(0.8982);">20</span>
<div style="left:1558px;top:1060px;width:95px;height:25px;background:#f0f0f0;border:1px solid;border-color:#fff #696969 #696969 #fff;box-shadow:inset -1px -1px 0 #a0a0a0;"></div>
<span class="t" id="t151" style="top:1063.5px;font-size:12px;line-height:16px;color:#000;left:1605.5px;transform-origin:0 50%;transform:scaleX(0.9191) translateX(-50%);">Применить</span>
<div style="left:1655px;top:1060px;width:95px;height:25px;background:#f0f0f0;border:1px solid;border-color:#fff #696969 #696969 #fff;box-shadow:inset -1px -1px 0 #a0a0a0;"></div>
<span class="t" id="t152" style="top:1063.5px;font-size:12px;line-height:16px;color:#000;left:1702.5px;transform-origin:0 50%;transform:scaleX(0.8940) translateX(-50%);">Отмена</span>
<div style="left:497px;top:383px;width:762px;height:325px;background:#fff;border:1px solid #6f6f6f;"></div>
<span class="t" id="t153" style="top:390.8px;font-size:12.5px;line-height:16.5px;color:#000;left:527.3px;transform-origin:0 50%;transform:scaleX(0.9644);">Привязка к конструктиву</span>
<div style="left:1138px;top:398px;width:11px;height:1px;background:#000;"></div>
<div style="left:1184px;top:393px;width:10px;height:10px;border:1px solid #000;"></div>
<svg style="left:1229px;top:392px" width="11" height="11"><path d="M0.5 0.5L10.5 10.5M10.5 0.5L0.5 10.5" stroke="#000" stroke-width="1.1" fill="none"/></svg>
<div style="left:498px;top:414px;width:760px;height:1px;background:#a0a0a0;"></div>
<div style="left:498px;top:414px;width:1px;height:253px;background:#808080;"></div>
<div style="left:499px;top:415px;width:728px;height:36px;background:#f0f0f0;"></div>
<div style="left:499px;top:451px;width:327px;height:50px;background:#f0f0f0;"></div>
<div style="left:1027px;top:451px;width:199px;height:50px;background:#f0f0f0;"></div>
<div style="left:499px;top:415px;width:727px;height:1px;background:#fff;"></div>
<div style="left:827px;top:433px;width:399px;height:1px;background:#fff;"></div>
<div style="left:827px;top:415px;width:1px;height:35px;background:#fff;"></div>
<div style="left:1027px;top:415px;width:1px;height:35px;background:#fff;"></div>
<div style="left:927px;top:435px;width:1px;height:14px;background:#fff;"></div>
<div style="left:1127px;top:435px;width:1px;height:14px;background:#fff;"></div>
<div style="left:499px;top:451px;width:327px;height:1px;background:#fff;"></div>
<div style="left:1027px;top:451px;width:199px;height:1px;background:#fff;"></div>
<div style="left:1027px;top:451px;width:1px;height:16px;background:#fff;"></div>
<div style="left:1127px;top:451px;width:1px;height:16px;background:#fff;"></div>
<div style="left:499px;top:468px;width:327px;height:1px;background:#fff;"></div>
<div style="left:1027px;top:468px;width:199px;height:1px;background:#fff;"></div>
<div style="left:1027px;top:468px;width:1px;height:16px;background:#fff;"></div>
<div style="left:1127px;top:468px;width:1px;height:16px;background:#fff;"></div>
<div style="left:499px;top:485px;width:327px;height:1px;background:#fff;"></div>
<div style="left:1027px;top:485px;width:199px;height:1px;background:#fff;"></div>
<div style="left:1027px;top:485px;width:1px;height:16px;background:#fff;"></div>
<div style="left:1127px;top:485px;width:1px;height:16px;background:#fff;"></div>
<div style="left:499px;top:450px;width:728px;height:1px;background:#a0a0a0;"></div>
<div style="left:499px;top:467px;width:728px;height:1px;background:#a0a0a0;"></div>
<div style="left:499px;top:484px;width:728px;height:1px;background:#a0a0a0;"></div>
<div style="left:499px;top:501px;width:728px;height:1px;background:#a0a0a0;"></div>
<div style="left:826px;top:432px;width:401px;height:1px;background:#a0a0a0;"></div>
<div style="left:826px;top:415px;width:1px;height:87px;background:#a0a0a0;"></div>
<div style="left:1026px;top:415px;width:1px;height:87px;background:#a0a0a0;"></div>
<div style="left:1226px;top:415px;width:1px;height:87px;background:#a0a0a0;"></div>
<div style="left:926px;top:435px;width:1px;height:67px;background:#a0a0a0;"></div>
<div style="left:1126px;top:435px;width:1px;height:67px;background:#a0a0a0;"></div>
<span class="t" id="t154" style="top:425.0px;font-size:12px;line-height:16px;color:#000;font-weight:bold;left:662.5px;transform-origin:0 50%;transform:scaleX(1.0169) translateX(-50%);">Наименование работ и затрат</span>
<span class="t" id="t155" style="top:416.0px;font-size:12px;line-height:16px;color:#000;font-weight:bold;left:926px;transform-origin:0 50%;transform:scaleX(1.0111) translateX(-50%);">Привязать</span>
<span class="t" id="t156" style="top:416.0px;font-size:12px;line-height:16px;color:#000;font-weight:bold;left:1126px;transform-origin:0 50%;transform:scaleX(1.0289) translateX(-50%);">Остаток</span>
<span class="t" id="t157" style="top:434.0px;font-size:12px;line-height:16px;color:#000;left:829px;transform-origin:0 50%;transform:scaleX(0.8433);">%</span>
<span class="t" id="t158" style="top:434.0px;font-size:12px;line-height:16px;color:#000;left:1029px;transform-origin:0 50%;transform:scaleX(0.8433);">%</span>
<span class="t" id="t159" style="top:434.0px;font-size:12px;line-height:16px;color:#000;left:929px;transform-origin:0 50%;transform:scaleX(0.9031);">Руб.</span>
<span class="t" id="t160" style="top:434.0px;font-size:12px;line-height:16px;color:#000;left:1129px;transform-origin:0 50%;transform:scaleX(0.9031);">Руб.</span>
<span class="t" id="t161" style="top:451.0px;font-size:12px;line-height:16px;color:#000;font-weight:bold;left:502px;transform-origin:0 50%;transform:scaleX(1.0036);">Затраты на временные здания и сооружения; 1,6%</span>
<span class="t" id="t162" style="top:451.0px;font-size:12px;line-height:16px;color:#000;left:829px;transform-origin:0 50%;transform:scaleX(0.8991);">100,00</span>
<span class="t" id="t163" style="top:451.0px;font-size:12px;line-height:16px;color:#000;left:1029px;transform-origin:0 50%;transform:scaleX(0.8991);">100,00</span>
<span class="t" id="t164" style="top:451.0px;font-size:12px;line-height:16px;color:#000;left:929px;transform-origin:0 50%;transform:scaleX(0.8990);">27 041,13</span>
<span class="t" id="t165" style="top:451.0px;font-size:12px;line-height:16px;color:#000;left:1129px;transform-origin:0 50%;transform:scaleX(0.8990);">27 041,13</span>
<span class="t" id="t166" style="top:468.0px;font-size:12px;line-height:16px;color:#000;font-weight:bold;left:502px;transform-origin:0 50%;transform:scaleX(1.0101);">Дополнительные затраты в зимнее время; 2,8%</span>
<span class="t" id="t167" style="top:468.0px;font-size:12px;line-height:16px;color:#000;left:829px;transform-origin:0 50%;transform:scaleX(0.8991);">100,00</span>
<span class="t" id="t168" style="top:468.0px;font-size:12px;line-height:16px;color:#000;left:1029px;transform-origin:0 50%;transform:scaleX(0.8991);">100,00</span>
<span class="t" id="t169" style="top:468.0px;font-size:12px;line-height:16px;color:#000;left:929px;transform-origin:0 50%;transform:scaleX(0.8990);">32 342,12</span>
<span class="t" id="t170" style="top:468.0px;font-size:12px;line-height:16px;color:#000;left:1129px;transform-origin:0 50%;transform:scaleX(0.8990);">32 342,12</span>
<span class="t" id="t171" style="top:485.0px;font-size:12px;line-height:16px;color:#000;font-weight:bold;left:502px;transform-origin:0 50%;transform:scaleX(1.0101);">Дополнительные затраты в зимнее время; 2,1%</span>
<span class="t" id="t172" style="top:485.0px;font-size:12px;line-height:16px;color:#000;left:829px;transform-origin:0 50%;transform:scaleX(0.8991);">100,00</span>
<span class="t" id="t173" style="top:485.0px;font-size:12px;line-height:16px;color:#000;left:1029px;transform-origin:0 50%;transform:scaleX(0.8991);">100,00</span>
<span class="t" id="t174" style="top:485.0px;font-size:12px;line-height:16px;color:#000;left:929px;transform-origin:0 50%;transform:scaleX(0.8952);">60 082,11</span>
<span class="t" id="t175" style="top:485.0px;font-size:12px;line-height:16px;color:#000;left:1129px;transform-origin:0 50%;transform:scaleX(0.8952);">60 082,11</span>
<div style="left:498px;top:666px;width:760px;height:1px;background:#a0a0a0;"></div>
<div style="left:498px;top:667px;width:760px;height:40px;background:#f0f0f0;"></div>
<div style="left:1081px;top:674px;width:81px;height:25px;background:#f0f0f0;border:1px solid #000;"></div>
<div style="left:1082px;top:675px;width:79px;height:23px;border:1px solid;border-color:#fff #696969 #696969 #fff;box-shadow:inset -1px -1px 0 #a0a0a0;"></div>
<div style="left:1085px;top:678px;width:74px;height:18px;border:1px dotted #000;"></div>
<span class="t" id="t176" style="top:677.0px;font-size:12px;line-height:16px;color:#000;left:1121.5px;transform-origin:0 50%;transform:scaleX(0.9191) translateX(-50%);">Применить</span>
<div style="left:1169px;top:674px;width:81px;height:25px;background:#f0f0f0;border:1px solid;border-color:#fff #696969 #696969 #fff;box-shadow:inset -1px -1px 0 #a0a0a0;"></div>
<span class="t" id="t177" style="top:677.5px;font-size:12px;line-height:16px;color:#000;left:1209.5px;transform-origin:0 50%;transform:scaleX(0.8940) translateX(-50%);">Отмена</span>
<svg style="left:18px;top:31px" width="16" height="16" viewBox="0 0 16 16"><path d="M4.5 3 V13.5 H7 M4.5 5.5 H7 M4.5 9.5 H7" stroke="#26406e" fill="none"/>
<rect x="0.5" y="0.5" width="7" height="2.4" fill="#f4e400" stroke="#8a8a30" stroke-width="0.8"/>
<rect x="7" y="4.2" width="6" height="2.6" fill="#a9ccf2" stroke="#5a7fb8" stroke-width="0.7"/>
<rect x="7" y="8.2" width="6" height="2.6" fill="#a9ccf2" stroke="#5a7fb8" stroke-width="0.7"/>
<rect x="7" y="12.2" width="6" height="2.6" fill="#a9ccf2" stroke="#5a7fb8" stroke-width="0.7"/></svg>
<svg style="left:40px;top:31px" width="17" height="16" viewBox="0 0 17 16"><path d="M0 9 H4 M2.5 6.5 L5.2 9 L2.5 11.5" stroke="#8c8c8c" stroke-width="1.6" fill="none"/>
<path d="M8 3 V13.5 H10 M8 5.5 H10 M8 9.5 H10" stroke="#8c8c8c" fill="none"/>
<rect x="3.8" y="0.5" width="7" height="2.4" fill="#ededed" stroke="#8c8c8c" stroke-width="0.7"/>
<rect x="10" y="4.2" width="6" height="2.6" fill="#ededed" stroke="#8c8c8c" stroke-width="0.7"/>
<rect x="10" y="8.2" width="6" height="2.6" fill="#ededed" stroke="#8c8c8c" stroke-width="0.7"/>
<rect x="10" y="12.2" width="6" height="2.6" fill="#ededed" stroke="#8c8c8c" stroke-width="0.7"/></svg>
<svg style="left:70px;top:31px" width="14" height="14" viewBox="0 0 14 14"><rect x="0.5" y="0.5" width="13" height="13" fill="#f4fbf2" stroke="#3a7d2e"/>
<path d="M2.5 3 L5.5 3 L11.5 11 L8.5 11 Z" fill="#2f8f2a"/><path d="M11.5 3 L8.5 3 L2.5 11 L5.5 11 Z" fill="#4bb040"/></svg>
<svg style="left:98px;top:30px" width="16" height="16" viewBox="0 0 16 16"><path d="M3 0 H13 L15.5 2.5 V16 H3 Z" fill="#e9e9e9" stroke="#b8b8b8" stroke-width="0.6"/>
<rect x="0" y="2" width="14" height="6" fill="#8f8f8f"/>
<text x="7" y="7" font-family="Liberation Sans, sans-serif" font-size="5.5" font-weight="bold" fill="#fff" text-anchor="middle">PDF</text>
<path d="M4 16 Q6 11 10 9.5 M7 16 Q9 12 13 10.5 M11 16 Q12 13 15 12" stroke="#8a8a8a" stroke-width="1.5" fill="none"/></svg>
<svg style="left:127px;top:30px" width="16" height="16" viewBox="0 0 16 16"><path d="M1.5 14.5 L7 8.5" stroke="#e0701c" stroke-width="2.6" stroke-linecap="round"/>
<circle cx="10" cy="5.5" r="4.6" fill="#b9ccf2" stroke="#f0a070" stroke-width="1.3"/><circle cx="10.5" cy="5" r="2.2" fill="#dfe8fb"/></svg>
<svg style="left:164px;top:31px" width="14" height="14" viewBox="0 0 14 14"><path d="M0.5 0.5 H12 L13.5 2 V13.5 H0.5 Z" fill="#2b2b2b"/>
<rect x="3" y="0.5" width="7.5" height="4.6" fill="#8d8d8d"/><rect x="7.6" y="1.2" width="1.8" height="3" fill="#2b2b2b"/>
<rect x="2" y="7.2" width="10" height="6.3" fill="#fffbe6"/><rect x="2" y="10" width="10" height="3.5" fill="#c9eef0"/></svg>
<svg style="left:186.8px;top:31.7px" width="15" height="13" viewBox="0 0 15 13"><path d="M3.6 3.2 Q0.2 6.6 3 10 Q4.8 11.9 6.9 11.6" stroke="#2c9c1c" stroke-width="2.3" fill="none"/>
<path d="M1.2 0.7 L6.1 0 L5.7 4.9 Z" fill="#2c9c1c"/>
<path d="M7.6 1 Q10.6 0.8 12 3.6 Q13.2 6.4 11 9" stroke="#239316" stroke-width="2.3" fill="none"/>
<path d="M8 7.4 L13.2 11.6 L8 12.4 Z" fill="#0d7d0d"/></svg>
<svg style="left:210.5px;top:34px" width="13" height="8" viewBox="0 0 13 8"><path d="M3.5 4 Q8.5 -0.8 11.6 6.6" stroke="#2474f0" stroke-width="2.1" fill="none"/><path d="M0.4 1.6 L0.6 6.2 L5 5.6 Z" fill="#0a36d2"/></svg>
<svg style="left:239.5px;top:31px" width="14" height="15" viewBox="0 0 14 15"><path d="M3.6 4.6 Q8 -0.6 11 4 Q12 6 11.8 8" stroke="#3c2cf0" stroke-width="2.1" fill="none"/><path d="M0.2 2 L0.4 7.6 L5.2 6.6 Z" fill="#3c2cf0"/>
<rect x="5.2" y="7.6" width="8" height="7" fill="#fff" stroke="#5666b4" stroke-width="1.1"/>
<path d="M7 9.2 L11.4 13 M11.4 9.2 L7 13 M9.2 9 V13.2 M6.9 11.1 H11.5" stroke="#000" stroke-width="0.85"/></svg>
<svg style="left:268px;top:30px" width="16" height="16" viewBox="0 0 16 16"><rect x="0.5" y="3.5" width="13" height="4" fill="#f2f2f2" stroke="#808080"/>
<path d="M2.5 5.5 H6 M3.6 4.5 V6.5" stroke="#808080" stroke-width="0.8"/>
<rect x="2.5" y="8" width="9" height="7.5" fill="#a6a6a6" stroke="#808080"/><path d="M2.5 11.7 H11.5" stroke="#808080"/><rect x="8.0" y="0.0" width="7" height="7" fill="#8e8e8e"/><path d="M8.6 0.6000000000000001 L14.4 6.4 M14.4 0.6000000000000001 L8.6 6.4" stroke="#fff" stroke-width="0.8"/><circle cx="11.5" cy="3.5" r="1.6" fill="#fff"/></svg>
<svg style="left:291px;top:30px" width="16" height="16" viewBox="0 0 16 16"><rect x="0.5" y="3.5" width="13" height="4" fill="#a6a6a6" stroke="#808080"/>
<rect x="2.5" y="8" width="9" height="7.5" fill="#a6a6a6" stroke="#808080"/><rect x="3" y="12" width="8" height="3" fill="#f2f2f2"/>
<path d="M2.5 11.7 H11.5" stroke="#808080"/><path d="M4.5 13.6 H8 M5.6 12.6 V14.6" stroke="#808080" stroke-width="0.8"/><rect x="8.0" y="0.0" width="7" height="7" fill="#8e8e8e"/><path d="M8.6 0.6000000000000001 L14.4 6.4 M14.4 0.6000000000000001 L8.6 6.4" stroke="#fff" stroke-width="0.8"/><circle cx="11.5" cy="3.5" r="1.6" fill="#fff"/></svg>
<svg style="left:313px;top:30px" width="17" height="16" viewBox="0 0 17 16"><path d="M2.5 2.7 H13.5 V11.6 H9 L6 14.8 L5.6 11.6 H2.5 Q0.6 11.6 0.6 9.8 V4.6 Q0.6 2.7 2.5 2.7 Z" fill="#f4f4f4" stroke="#909090" stroke-width="0.9"/><rect x="9.3" y="0.0" width="7" height="7" fill="#8e8e8e"/><path d="M9.9 0.6000000000000001 L15.700000000000001 6.4 M15.700000000000001 0.6000000000000001 L9.9 6.4" stroke="#fff" stroke-width="0.8"/><circle cx="12.8" cy="3.5" r="1.6" fill="#fff"/></svg>
<svg style="left:342px;top:33px" width="17" height="11" viewBox="0 0 17 11"><ellipse cx="7" cy="6" rx="6.8" ry="4.3" fill="#909090"/><rect x="4" y="0.3" width="6.5" height="2.4" fill="#8a8a8a"/>
<rect x="3" y="3" width="8" height="1.6" fill="#d8d8d8"/><path d="M13 5.5 L16 2 V10.5 Z" fill="#858585"/><rect x="15.6" y="2" width="0.9" height="9" fill="#333"/>
<path d="M3 7.5 Q7 9.5 11 7.5" stroke="#d8d8d8" fill="none"/></svg>
<svg style="left:365px;top:32px" width="16" height="13" viewBox="0 0 16 13"><rect x="5" y="0.5" width="8.5" height="9" fill="#a8a8a8" stroke="#7c7c7c" stroke-width="0.8"/>
<path d="M8 3 L11 6 M11 3 L8 6" stroke="#707070" stroke-width="0.8"/>
<rect x="0.5" y="5" width="6" height="6.5" fill="#8e8e8e" stroke="#6a6a6a" stroke-width="0.6"/>
<path d="M2.3 5.5 V11 M4.3 5.5 V11" stroke="#c4c4c4" stroke-width="0.7"/>
<rect x="10.5" y="8.5" width="5" height="4" fill="#b8b8b8" stroke="#7c7c7c" stroke-width="0.8"/></svg>
<svg style="left:531px;top:32px" width="12" height="11" viewBox="0 0 12 11"><path d="M1 0.8 L10.5 10.2 M10.5 0.8 L1 10.2" stroke="#9b9b9b" stroke-width="1.3" fill="none"/></svg>
<svg style="left:558px;top:30px" width="16" height="16" viewBox="0 0 16 16"><rect x="3.5" y="0.6" width="9" height="13" rx="1" fill="#f6f6f6" stroke="#8c8c8c" stroke-width="0.9"/>
<rect x="4.6" y="2" width="6.8" height="2.4" fill="#6e6e6e"/>
<path d="M4.4 6.3 H11.6 M4.4 8.4 H11.6 M4.4 10.5 H11.6 M6.2 5.2 V12.6 M8 5.2 V12.6 M9.8 5.2 V12.6" stroke="#b4b4b4" stroke-width="0.7"/>
<ellipse cx="3" cy="11" rx="2.8" ry="1.3" fill="#cfcfcf" stroke="#777" stroke-width="0.8"/><ellipse cx="3" cy="13.6" rx="2.8" ry="1.3" fill="#cfcfcf" stroke="#777" stroke-width="0.8"/>
<ellipse cx="13" cy="9" rx="2.8" ry="1.3" fill="#cfcfcf" stroke="#777" stroke-width="0.8"/><ellipse cx="13" cy="11.4" rx="2.8" ry="1.3" fill="#cfcfcf" stroke="#777" stroke-width="0.8"/><ellipse cx="13" cy="13.8" rx="2.8" ry="1.3" fill="#cfcfcf" stroke="#777" stroke-width="0.8"/></svg>
<svg style="left:582px;top:30px" width="15" height="16" viewBox="0 0 15 16"><path d="M4 2.5 H9 V6 H13 V15 H1 V5.5 Z" fill="#f6f6f6" stroke="#9a9a9a" stroke-width="0.9"/>
<rect x="8" y="0.6" width="5.5" height="6" fill="#fbfbfb" stroke="#a8a8a8" stroke-width="0.8"/>
<path d="M1 10 H6 M3.5 7.5 V12.5" stroke="#333" stroke-width="1.5"/><rect x="6.5" y="11.8" width="4.5" height="1.6" fill="#8a8a8a"/></svg>
<svg style="left:607px;top:32px" width="8" height="13" viewBox="0 0 8 13"><path d="M1 3.8 H7.2 M4.1 0.8 V6.8" stroke="#333" stroke-width="2.2"/><rect x="1" y="9.6" width="6.2" height="2.2" rx="0.6" fill="#9a9a9a"/></svg>
<svg style="left:634px;top:30px" width="13" height="16" viewBox="0 0 13 16"><path d="M2.5 0.5 L8 11 M10.5 0.5 L5 11" stroke="#a4a4a4" stroke-width="1.1" fill="none"/>
<circle cx="3.3" cy="12.8" r="2" fill="none" stroke="#8a8a8a" stroke-width="1.1"/><circle cx="9.7" cy="12.8" r="2" fill="none" stroke="#8a8a8a" stroke-width="1.1"/></svg>
<svg style="left:656px;top:31px" width="16" height="15" viewBox="0 0 16 15"><rect x="0.6" y="0.6" width="8" height="10" fill="#f4f4f4" stroke="#a6a6a6" stroke-width="0.9"/>
<rect x="6.5" y="3.4" width="8.5" height="11" fill="#f8f8f8" stroke="#a6a6a6" stroke-width="0.9"/>
<path d="M2 3 H6 M2 5 H6 M2 7 H6 M8.3 6.5 H13.5 M8.3 8.8 H13.5 M8.3 11 H13.5" stroke="#a6a6a6" stroke-width="0.8"/></svg>
<svg style="left:679px;top:30px" width="16" height="16" viewBox="0 0 16 16"><rect x="0.6" y="1.5" width="14.8" height="12" rx="1.5" fill="#b4b4b4" stroke="#9a9a9a" stroke-width="0.8"/>
<rect x="5" y="0.3" width="6" height="2.6" rx="1" fill="#cfcfcf" stroke="#9a9a9a" stroke-width="0.6"/>
<path d="M3.5 6 L5.5 4 H12.5 V15.4 H3.5 Z" fill="#f4f4f4" stroke="#8e8e8e" stroke-width="0.9"/>
<path d="M5.2 8 H11 M5.2 10.2 H11 M5.2 12.4 H11" stroke="#8e8e8e" stroke-width="0.8"/></svg>
<svg style="left:826px;top:31px" width="16" height="14" viewBox="0 0 16 14"><path d="M0.6 3 L3 0.6 H8.5 V10.5 H0.6 Z" fill="#f7f7f7" stroke="#c2c2c2" stroke-width="0.9"/>
<path d="M6.5 5.6 L9 3.2 H15.2 V13.4 H6.5 Z" fill="#f3f3f3" stroke="#c2c2c2" stroke-width="0.9"/></svg>
<svg style="left:849px;top:30px" width="16" height="16" viewBox="0 0 16 16"><rect x="0.5" y="1.5" width="15" height="12.5" rx="1.5" fill="#f7b02a" stroke="#e09a18" stroke-width="0.7"/>
<rect x="5" y="0.2" width="6.5" height="2.6" rx="1" fill="#f6d267" stroke="#d9a52a" stroke-width="0.6"/>
<path d="M3.8 7 L6 4.8 H12.4 V15.5 H3.8 Z" fill="#d4f0f0" stroke="#6fa4b4" stroke-width="0.9"/></svg>
<svg style="left:908px;top:30px" width="17" height="16" viewBox="0 0 17 16"><path d="M0.5 10.5 L5 2 L12 4.5 L14.5 10 L8 15 Z" fill="#8a8a8a"/><path d="M0.5 10.5 L8 13.2 L14.5 9 L14.5 11 L8 15.4 L0.5 12.4 Z" fill="#dcdcdc" stroke="#a8a8a8" stroke-width="0.5"/>
<path d="M4.5 4 Q7 3 8.5 6" stroke="#e6e6e6" stroke-width="1.3" fill="none"/><rect x="9.0" y="1.0" width="7" height="7" fill="#8e8e8e"/><path d="M9.6 1.6 L15.4 7.4 M15.4 1.6 L9.6 7.4" stroke="#fff" stroke-width="0.8"/><circle cx="12.5" cy="4.5" r="1.6" fill="#fff"/></svg>
<svg style="left:931px;top:30px" width="17" height="16" viewBox="0 0 17 16"><rect x="1.5" y="2.5" width="14.5" height="12.8" fill="#fff" stroke="#b4b4b4" stroke-width="0.9"/><rect x="0.5" y="0.5" width="7" height="7" fill="#8e8e8e"/><path d="M1.1 1.1 L6.9 6.9 M6.9 1.1 L1.1 6.9" stroke="#fff" stroke-width="0.8"/><circle cx="4" cy="4" r="1.6" fill="#fff"/>
<text x="12.8" y="13.6" font-family="Liberation Sans, sans-serif" font-size="9" fill="#111" text-anchor="end" textLength="5.5" lengthAdjust="spacingAndGlyphs">Р</text></svg>
<svg style="left:954px;top:30px" width="17" height="16" viewBox="0 0 17 16"><rect x="1.5" y="2.5" width="14.5" height="12.8" fill="#fff" stroke="#b4b4b4" stroke-width="0.9"/><rect x="0.5" y="0.5" width="7" height="7" fill="#8e8e8e"/><path d="M1.1 1.1 L6.9 6.9 M6.9 1.1 L1.1 6.9" stroke="#fff" stroke-width="0.8"/><circle cx="4" cy="4" r="1.6" fill="#fff"/>
<text x="14.8" y="13.6" font-family="Liberation Sans, sans-serif" font-size="8.6" fill="#111" text-anchor="end" textLength="12" lengthAdjust="spacingAndGlyphs">ПР</text></svg>
<svg style="left:983px;top:31px" width="16" height="15" viewBox="0 0 16 15"><path d="M5 3 V13 H7.5 M5 5.5 H7.5 M5 9.2 H7.5" stroke="#9a9a9a" fill="none"/>
<rect x="0.5" y="0.6" width="8" height="2.2" fill="#ececec" stroke="#9a9a9a" stroke-width="0.7"/>
<rect x="7.5" y="4.4" width="5.5" height="2.2" fill="#ececec" stroke="#9a9a9a" stroke-width="0.7"/>
<rect x="7.5" y="8.1" width="5.5" height="2.2" fill="#ececec" stroke="#9a9a9a" stroke-width="0.7"/>
<rect x="7.5" y="11.8" width="5.5" height="2.2" fill="#ececec" stroke="#9a9a9a" stroke-width="0.7"/><path d="M8 6.5 L13.5 1 L15 2.4 L9.6 8 Z" fill="#bdbdbd" stroke="#8c8c8c" stroke-width="0.6"/></svg>
<svg style="left:1006px;top:31px" width="16" height="15" viewBox="0 0 16 15"><path d="M5 3 V13 H7.5 M5 5.5 H7.5 M5 9.2 H7.5" stroke="#9a9a9a" fill="none"/>
<rect x="0.5" y="0.6" width="8" height="2.2" fill="#ececec" stroke="#9a9a9a" stroke-width="0.7"/>
<rect x="7.5" y="4.4" width="5.5" height="2.2" fill="#ececec" stroke="#9a9a9a" stroke-width="0.7"/>
<rect x="7.5" y="8.1" width="5.5" height="2.2" fill="#ececec" stroke="#9a9a9a" stroke-width="0.7"/>
<rect x="7.5" y="11.8" width="5.5" height="2.2" fill="#ececec" stroke="#9a9a9a" stroke-width="0.7"/><path d="M12 1.5 L15.2 4.7 M15.2 1.5 L12 4.7" stroke="#8c8c8c" stroke-width="0.9"/></svg>
<svg style="left:1042px;top:31px" width="16" height="15" viewBox="0 0 16 15"><path d="M5 4.5 H16" stroke="#5a5a8c" stroke-width="0.9"/><path d="M5 7.5 H16" stroke="#5a5a8c" stroke-width="0.9"/><path d="M5 10.5 H16" stroke="#5a5a8c" stroke-width="0.9"/><path d="M5 13.5 H16" stroke="#5a5a8c" stroke-width="0.9"/><path d="M0 3.5 H4 M2.2 0.8 L5.2 3.5 L2.2 6.2" stroke="#1a34d8" stroke-width="1.6" fill="none"/></svg>
<svg style="left:1065px;top:31px" width="16" height="15" viewBox="0 0 16 15"><path d="M5 4.5 H16" stroke="#5a5a8c" stroke-width="0.9"/><path d="M5 7.5 H16" stroke="#5a5a8c" stroke-width="0.9"/><path d="M5 10.5 H16" stroke="#5a5a8c" stroke-width="0.9"/><path d="M5 13.5 H16" stroke="#5a5a8c" stroke-width="0.9"/><path d="M3 7 V2 M0.4 4 L3 1 L5.6 4" stroke="#1a34d8" stroke-width="1.6" fill="none"/></svg>
<svg style="left:1087px;top:31px" width="17" height="15" viewBox="0 0 17 15"><path d="M6 4.5 H16" stroke="#5a5a8c" stroke-width="0.9"/><path d="M6 7.5 H16" stroke="#5a5a8c" stroke-width="0.9"/><path d="M6 10.5 H16" stroke="#5a5a8c" stroke-width="0.9"/><path d="M6 13.5 H16" stroke="#5a5a8c" stroke-width="0.9"/><path d="M3 8 V13 M0.4 11 L3 14 L5.6 11" stroke="#1a34d8" stroke-width="1.6" fill="none"/></svg>
<svg style="left:1110px;top:31px" width="17" height="15" viewBox="0 0 17 15"><path d="M6 4.5 H16" stroke="#5a5a8c" stroke-width="0.9"/><path d="M6 7.5 H16" stroke="#5a5a8c" stroke-width="0.9"/><path d="M6 10.5 H16" stroke="#5a5a8c" stroke-width="0.9"/><path d="M6 13.5 H16" stroke="#5a5a8c" stroke-width="0.9"/><path d="M0 12.5 H4 M2.2 9.8 L5.2 12.5 L2.2 15.2" stroke="#1a34d8" stroke-width="1.6" fill="none"/></svg>
<svg style="left:1147px;top:30px" width="16" height="16" viewBox="0 0 16 16"><path d="M7 1.5 A6.5 6.5 0 1 1 3 12.5" stroke="#9aa4a4" stroke-width="1.6" fill="none"/>
<path d="M1 14.5 L9.5 5.5" stroke="#c8782a" stroke-width="1.8"/><path d="M5.5 2 L9 0.8 L13 4.8 L11 6.2 Z" fill="#3c3c3c"/>
<path d="M11 12 L14.5 15.2" stroke="#c8782a" stroke-width="1.8"/></svg>
<svg style="left:1169px;top:31px" width="18" height="14" viewBox="0 0 18 14"><path d="M0.5 4.5 H10.5 V10 H0.5 Z" fill="#2a6fe0" stroke="#1a4fb0" stroke-width="0.6"/>
<path d="M11 6 H14.5 L16.5 8.2 V10.8 H11 Z" fill="#f2a230" stroke="#c07818" stroke-width="0.6"/><rect x="12" y="6.8" width="2.4" height="1.8" fill="#f8e8c0"/>
<rect x="0.5" y="10" width="16.5" height="1.2" fill="#333"/>
<circle cx="4" cy="11.8" r="1.9" fill="#222"/><circle cx="13.2" cy="11.8" r="1.9" fill="#222"/><circle cx="4" cy="11.8" r="0.7" fill="#bbb"/><circle cx="13.2" cy="11.8" r="0.7" fill="#bbb"/></svg>
<svg style="left:1193px;top:34px" width="16" height="10" viewBox="0 0 16 10"><rect x="5.5" y="0.3" width="4.6" height="2.6" rx="0.5" fill="#f07c1c" stroke="#c85a0c" stroke-width="0.5"/><rect x="3" y="3.3" width="4.6" height="2.6" rx="0.5" fill="#f07c1c" stroke="#c85a0c" stroke-width="0.5"/><rect x="8" y="3.3" width="4.6" height="2.6" rx="0.5" fill="#f07c1c" stroke="#c85a0c" stroke-width="0.5"/><rect x="0.5" y="6.3" width="4.6" height="2.6" rx="0.5" fill="#f07c1c" stroke="#c85a0c" stroke-width="0.5"/><rect x="5.5" y="6.3" width="4.6" height="2.6" rx="0.5" fill="#f07c1c" stroke="#c85a0c" stroke-width="0.5"/><rect x="10.5" y="6.3" width="4.6" height="2.6" rx="0.5" fill="#f07c1c" stroke="#c85a0c" stroke-width="0.5"/></svg>
<svg style="left:1221px;top:31px" width="18" height="14" viewBox="0 0 18 14"><rect x="4.91" y="0.2" width="2.852" height="1.612" rx="0.5" fill="#f07c1c" stroke="#c85a0c" stroke-width="0.5"/><rect x="3.36" y="2.06" width="2.852" height="1.612" rx="0.5" fill="#f07c1c" stroke="#c85a0c" stroke-width="0.5"/><rect x="6.46" y="2.06" width="2.852" height="1.612" rx="0.5" fill="#f07c1c" stroke="#c85a0c" stroke-width="0.5"/><rect x="1.81" y="3.92" width="2.852" height="1.612" rx="0.5" fill="#f07c1c" stroke="#c85a0c" stroke-width="0.5"/><rect x="4.91" y="3.92" width="2.852" height="1.612" rx="0.5" fill="#f07c1c" stroke="#c85a0c" stroke-width="0.5"/><rect x="8.01" y="3.92" width="2.852" height="1.612" rx="0.5" fill="#f07c1c" stroke="#c85a0c" stroke-width="0.5"/><path d="M0.5 4.5 H10.5 V10 H0.5 Z" fill="#2a6fe0" stroke="#1a4fb0" stroke-width="0.6"/>
<path d="M11 6 H14.5 L16.5 8.2 V10.8 H11 Z" fill="#f2a230" stroke="#c07818" stroke-width="0.6"/><rect x="12" y="6.8" width="2.4" height="1.8" fill="#f8e8c0"/>
<rect x="0.5" y="10" width="16.5" height="1.2" fill="#333"/>
<circle cx="4" cy="11.8" r="1.9" fill="#222"/><circle cx="13.2" cy="11.8" r="1.9" fill="#222"/><circle cx="4" cy="11.8" r="0.7" fill="#bbb"/><circle cx="13.2" cy="11.8" r="0.7" fill="#bbb"/></svg>
<svg style="left:1258px;top:31px" width="17" height="15" viewBox="0 0 17 15"><path d="M1 10.5 L10 7.5 L16 9.5 L16 12 L7 15 L1 13 Z" fill="#fff" stroke="#e8505a" stroke-width="1"/>
<path d="M1 6.5 L10 3.5 L16 5.5 L16 8 L7 11 L1 9 Z" fill="#fff" stroke="#e8505a" stroke-width="1"/>
<path d="M3 3.5 L11 0.8 L16 2.6 L8 5.6 Z" fill="#f05aa0" stroke="#f05aa0" stroke-width="1"/>
<path d="M3 3.5 L8 5.6 L8 7 L3 5.2Z" fill="#f05aa0"/></svg>
<svg style="left:1281px;top:31px" width="17" height="15" viewBox="0 0 17 15"><path d="M1 10.5 L10 7.5 L16 9.5 L16 12 L7 15 L1 13 Z" fill="#fff" stroke="#38a8e8" stroke-width="1"/>
<path d="M1 6.5 L10 3.5 L16 5.5 L16 8 L7 11 L1 9 Z" fill="#fff" stroke="#38a8e8" stroke-width="1"/>
<path d="M3 3.5 L11 0.8 L16 2.6 L8 5.6 Z" fill="#2a5ad8" stroke="#2a5ad8" stroke-width="1"/>
<path d="M3 3.5 L8 5.6 L8 7 L3 5.2Z" fill="#2a5ad8"/></svg>
<svg style="left:0;top:0" width="1757" height="1120" viewBox="0 0 1757 1120">
<g stroke="#ff0000" fill="none" stroke-width="2.8">
<rect x="11.9" y="781.2" width="1165" height="35.7"/>
<rect x="11.9" y="875" width="1163" height="28.9"/>
<path d="M195.6 783 L510 226"/>
<path d="M106.6 877.5 L506 232"/>
<path d="M519 212 L872 372"/>
</g>
<g fill="#ff0000" stroke="none">
<path d="M519.2 211.6 L497.6 232 L512.5 240.3 Z"/>
<path d="M519.2 211.6 L503 229 L516.5 237 Z"/>
<path d="M891 379.8 L872.4 362.8 L865.8 377.6 Z"/>
</g></svg>
</body></html>
